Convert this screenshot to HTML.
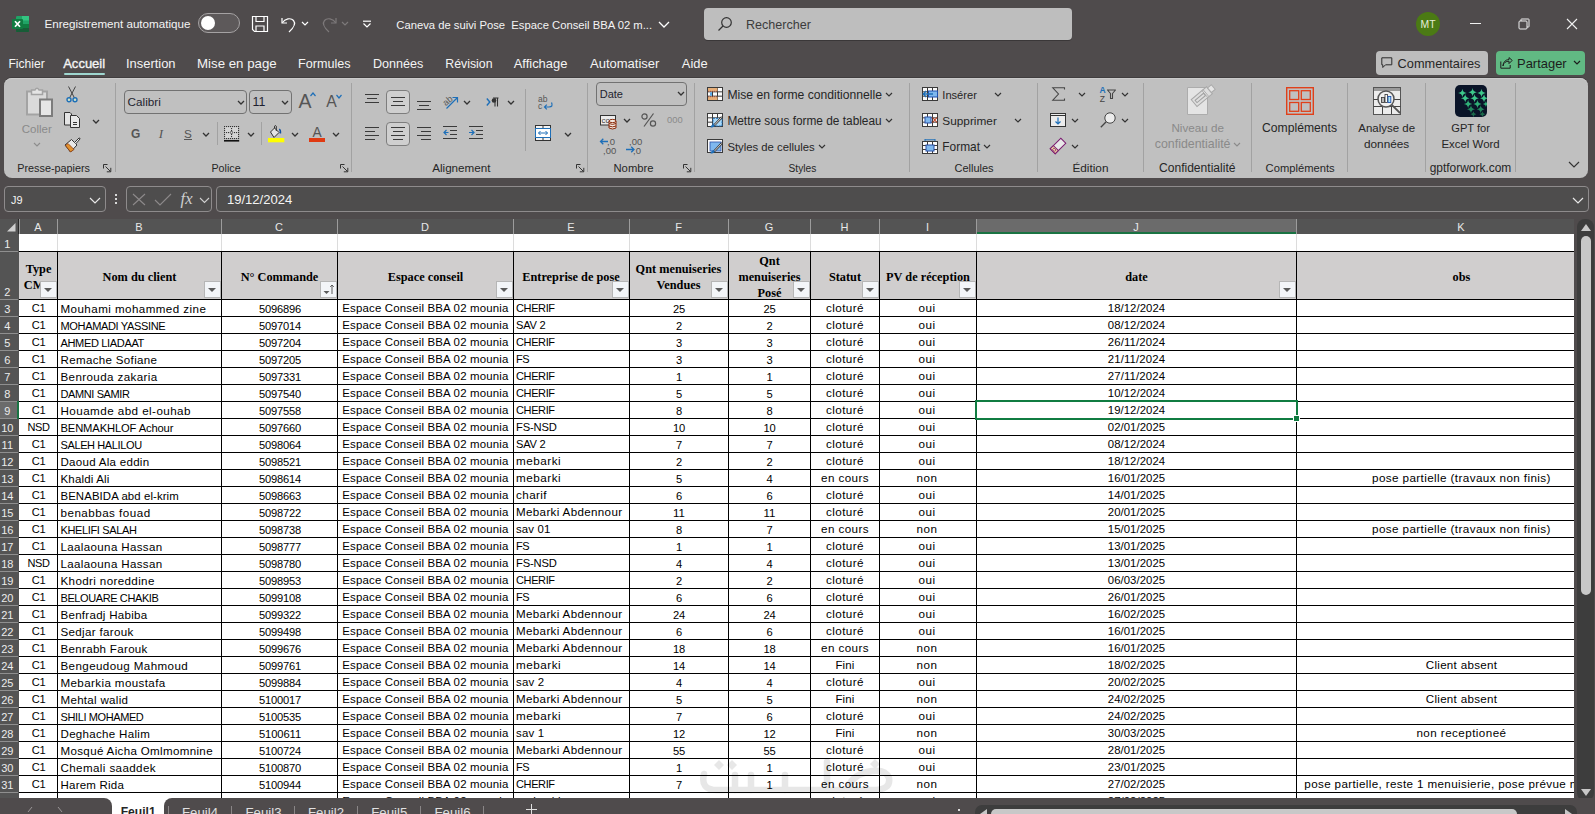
<!DOCTYPE html><html><head><meta charset="utf-8"><style>
*{margin:0;padding:0;box-sizing:border-box}
html,body{width:1595px;height:814px;overflow:hidden;background:#4f4b4c;font-family:"Liberation Sans",sans-serif}
.a{position:absolute}
svg.a{overflow:visible}
.t{position:absolute;white-space:nowrap}
.cell{position:absolute;white-space:nowrap;overflow:hidden;color:#000;line-height:17px;height:17px}
</style></head><body>

<svg class="a" style="left:12px;top:16px" width="17" height="16" viewBox="0 0 17 16"><rect x="4" y="0" width="13" height="16" rx="1.2" fill="#21a366"/>
<rect x="4" y="8" width="13" height="8" fill="#107c41"/><rect x="10" y="0" width="7" height="4.5" fill="#33c481"/>
<path d="M4 12 H17 V14.8 Q17 16 15.8 16 H5.2 Q4 16 4 14.8 Z" fill="#185c37"/>
<rect x="0" y="3" width="11" height="10" rx="1" fill="#107c41"/>
<path d="M3 5.2 L8 10.8 M8 5.2 L3 10.8" stroke="#fff" stroke-width="1.7"/></svg>
<div class="t" style="left:44.50px;top:14.00px;font-size:11.62px;line-height:20px;color:#f4f4f4;font-family:'Liberation Sans',sans-serif">Enregistrement automatique</div>
<div class="a" style="left:198px;top:13px;width:42px;height:20px;border-radius:10px;border:1px solid #a5a2a3;background:#5d595a"></div>
<div class="a" style="left:201px;top:16px;width:14px;height:14px;border-radius:7px;background:#fff"></div>
<svg class="a" style="left:251px;top:15px" width="18" height="18" viewBox="0 0 18 18"><path d="M1.5 1.5 H16.5 V16.5 H3.5 L1.5 14.5 Z" fill="none" stroke="#fff" stroke-width="1.2"/><path d="M5 1.5 V6.5 H13 V1.5 M5 16.5 V11 H13 V16.5" fill="none" stroke="#fff" stroke-width="1.2"/></svg>
<svg class="a" style="left:280px;top:15px" width="18" height="18" viewBox="0 0 18 18"><path d="M2 3 V8 H7" fill="none" stroke="#fff" stroke-width="1.2"/><path d="M2.3 7.8 C5 3.5 11 2.5 13.5 5.5 C16 8.5 14.5 12 9 17" fill="none" stroke="#fff" stroke-width="1.2"/></svg>
<svg class="a" style="left:301px;top:21px" width="8" height="5.0" viewBox="0 0 8 5.0"><path d="M1 1 L4.0 4.0 L7 1" fill="none" stroke="#fff" stroke-width="1.2"/></svg>
<svg class="a" style="left:320px;top:15px" width="18" height="18" viewBox="0 0 18 18"><path d="M16 3 V8 H11" fill="none" stroke="#7d797a" stroke-width="1.2"/><path d="M15.7 7.8 C13 3.5 7 2.5 4.5 5.5 C2 8.5 3.5 12 9 17" fill="none" stroke="#7d797a" stroke-width="1.2"/></svg>
<svg class="a" style="left:341px;top:21px" width="8" height="5.0" viewBox="0 0 8 5.0"><path d="M1 1 L4.0 4.0 L7 1" fill="none" stroke="#7d797a" stroke-width="1.2"/></svg>
<svg class="a" style="left:362px;top:20px" width="10" height="9" viewBox="0 0 10 9"><path d="M1 1.2 H9" stroke="#fff" stroke-width="1.2"/><path d="M1.5 3.5 L5 7 L8.5 3.5" fill="none" stroke="#fff" stroke-width="1.2"/></svg>
<div class="t" style="left:396.30px;top:15.00px;font-size:11.26px;line-height:20px;color:#f4f4f4;font-family:'Liberation Sans',sans-serif;white-space:pre">Caneva de suivi Pose  Espace Conseil BBA 02 m...</div>
<svg class="a" style="left:658px;top:21px" width="12" height="7.0" viewBox="0 0 12 7.0"><path d="M1 1 L6.0 6.0 L11 1" fill="none" stroke="#fff" stroke-width="1.3"/></svg>
<div class="a" style="left:704px;top:8px;width:368px;height:32px;border-radius:4px;background:#bebebe;box-shadow:0 1px 0 #3a3738"></div>
<svg class="a" style="left:717px;top:16px" width="16" height="16" viewBox="0 0 16 16"><circle cx="9.5" cy="6.5" r="4.8" fill="none" stroke="#333" stroke-width="1.2"/><path d="M6 10 L1.5 14.5" stroke="#333" stroke-width="1.3"/></svg>
<div class="t" style="left:746.00px;top:15.00px;font-size:12.57px;line-height:20px;color:#3c3c3c;font-family:'Liberation Sans',sans-serif">Rechercher</div>
<div class="a" style="left:1416px;top:12px;width:24px;height:24px;border-radius:12px;background:#4b7a14"></div>
<div class="t" style="left:1420.50px;top:15.00px;font-size:10.39px;line-height:20px;color:#e6ecd8;font-family:'Liberation Sans',sans-serif">MT</div>
<div class="a" style="left:1470px;top:23px;width:11px;height:1px;background:#f0f0f0"></div>
<svg class="a" style="left:1518px;top:18px" width="12" height="12" viewBox="0 0 12 12"><rect x="1" y="3" width="8" height="8" rx="1" fill="none" stroke="#f0f0f0" stroke-width="1"/><path d="M3 3 V1.5 Q3 1 3.5 1 H10.5 Q11 1 11 1.5 V8.5 Q11 9 10.5 9 H9" fill="none" stroke="#f0f0f0" stroke-width="1"/></svg>
<svg class="a" style="left:1566px;top:18px" width="12" height="12" viewBox="0 0 12 12"><path d="M1 1 L11 11 M11 1 L1 11" stroke="#f0f0f0" stroke-width="1.1"/></svg>
<div class="t" style="left:8.40px;top:54.00px;font-size:12.1px;line-height:20px;color:#f4f4f4;font-family:'Liberation Sans',sans-serif">Fichier</div>
<div class="t" style="left:63.20px;top:54.00px;font-size:13.03px;line-height:20px;color:#f4f4f4;font-family:'Liberation Sans',sans-serif;-webkit-text-stroke:0.35px #f4f4f4">Accueil</div>
<div class="t" style="left:126.00px;top:54.00px;font-size:12.93px;line-height:20px;color:#f4f4f4;font-family:'Liberation Sans',sans-serif">Insertion</div>
<div class="t" style="left:197.00px;top:54.00px;font-size:13.27px;line-height:20px;color:#f4f4f4;font-family:'Liberation Sans',sans-serif">Mise en page</div>
<div class="t" style="left:298.00px;top:54.00px;font-size:12.62px;line-height:20px;color:#f4f4f4;font-family:'Liberation Sans',sans-serif">Formules</div>
<div class="t" style="left:373.00px;top:54.00px;font-size:12.59px;line-height:20px;color:#f4f4f4;font-family:'Liberation Sans',sans-serif">Données</div>
<div class="t" style="left:445.30px;top:54.00px;font-size:12.33px;line-height:20px;color:#f4f4f4;font-family:'Liberation Sans',sans-serif">Révision</div>
<div class="t" style="left:513.70px;top:54.00px;font-size:12.94px;line-height:20px;color:#f4f4f4;font-family:'Liberation Sans',sans-serif">Affichage</div>
<div class="t" style="left:590.00px;top:54.00px;font-size:13.03px;line-height:20px;color:#f4f4f4;font-family:'Liberation Sans',sans-serif">Automatiser</div>
<div class="t" style="left:681.80px;top:54.00px;font-size:12.89px;line-height:20px;color:#f4f4f4;font-family:'Liberation Sans',sans-serif">Aide</div>
<div class="a" style="left:64px;top:73px;width:41px;height:2px;background:#9ed6cf;border-radius:1px"></div>
<div class="a" style="left:1376px;top:51px;width:112px;height:24px;border-radius:4px;background:#bdbdbd"></div>
<svg class="a" style="left:1381px;top:57px" width="12" height="12" viewBox="0 0 12 12"><path d="M0.8 0.8 H10.8 V7.8 H4.5 L1.8 10.5 V7.8 H0.8 Z" fill="none" stroke="#2b2b2b" stroke-width="1"/></svg>
<div class="t" style="left:1397.60px;top:54.00px;font-size:12.76px;line-height:20px;color:#262626;font-family:'Liberation Sans',sans-serif">Commentaires</div>
<div class="a" style="left:1496px;top:51px;width:89px;height:24px;border-radius:4px;background:#61b983"></div>
<svg class="a" style="left:1500px;top:57px" width="13" height="12" viewBox="0 0 13 12"><path d="M0.8 4.5 V11.2 H10.2 V8" fill="none" stroke="#1f1f1f" stroke-width="1"/><path d="M3 9 C3.5 5.5 6 4.2 9 4.2 V6.6 L12.2 3.4 L9 0.6 V2.6 C5.5 2.6 3.2 5 3 9 Z" fill="none" stroke="#1f1f1f" stroke-width="1"/></svg>
<div class="t" style="left:1517.00px;top:54.00px;font-size:12.96px;line-height:20px;color:#1c1c1c;font-family:'Liberation Sans',sans-serif">Partager</div>
<svg class="a" style="left:1573px;top:60px" width="8" height="5.0" viewBox="0 0 8 5.0"><path d="M1 1 L4.0 4.0 L7 1" fill="none" stroke="#1c1c1c" stroke-width="1.2"/></svg>
<div class="a" style="left:4px;top:78px;width:1584px;height:100px;background:#c0c0c0;border-radius:8px;box-shadow:inset 0 1px 0 #cbcbcb, 0 -1px 0 #403d3e"></div>
<div class="a" style="left:115px;top:83px;width:1px;height:89px;background:#a2a2a2"></div>
<div class="a" style="left:351px;top:83px;width:1px;height:89px;background:#a2a2a2"></div>
<div class="a" style="left:587px;top:83px;width:1px;height:89px;background:#a2a2a2"></div>
<div class="a" style="left:694px;top:83px;width:1px;height:89px;background:#a2a2a2"></div>
<div class="a" style="left:909px;top:83px;width:1px;height:89px;background:#a2a2a2"></div>
<div class="a" style="left:1037px;top:83px;width:1px;height:89px;background:#a2a2a2"></div>
<div class="a" style="left:1143px;top:83px;width:1px;height:89px;background:#a2a2a2"></div>
<div class="a" style="left:1251px;top:83px;width:1px;height:89px;background:#a2a2a2"></div>
<div class="a" style="left:1347px;top:83px;width:1px;height:89px;background:#a2a2a2"></div>
<div class="a" style="left:1425px;top:83px;width:1px;height:89px;background:#a2a2a2"></div>
<div class="a" style="left:1515px;top:83px;width:1px;height:89px;background:#a2a2a2"></div>
<div class="t" style="left:17.30px;top:158.00px;font-size:10.82px;line-height:20px;color:#262626;font-family:'Liberation Sans',sans-serif">Presse-papiers</div>
<div class="t" style="left:211.50px;top:158.00px;font-size:10.68px;line-height:20px;color:#262626;font-family:'Liberation Sans',sans-serif">Police</div>
<div class="t" style="left:432.20px;top:158.00px;font-size:11.67px;line-height:20px;color:#262626;font-family:'Liberation Sans',sans-serif">Alignement</div>
<div class="t" style="left:613.50px;top:158.00px;font-size:11.25px;line-height:20px;color:#262626;font-family:'Liberation Sans',sans-serif">Nombre</div>
<div class="t" style="left:788.50px;top:159.00px;font-size:10.21px;line-height:20px;color:#262626;font-family:'Liberation Sans',sans-serif">Styles</div>
<div class="t" style="left:954.50px;top:158.00px;font-size:10.99px;line-height:20px;color:#262626;font-family:'Liberation Sans',sans-serif">Cellules</div>
<div class="t" style="left:1072.40px;top:158.00px;font-size:11.81px;line-height:20px;color:#262626;font-family:'Liberation Sans',sans-serif">Édition</div>
<div class="t" style="left:1159.00px;top:158.00px;font-size:12.07px;line-height:20px;color:#262626;font-family:'Liberation Sans',sans-serif">Confidentialité</div>
<div class="t" style="left:1265.60px;top:158.00px;font-size:11.2px;line-height:20px;color:#262626;font-family:'Liberation Sans',sans-serif">Compléments</div>
<div class="t" style="left:1429.70px;top:158.00px;font-size:11.94px;line-height:20px;color:#262626;font-family:'Liberation Sans',sans-serif">gptforwork.com</div>
<svg class="a" style="left:103px;top:164px" width="9" height="9" viewBox="0 0 9 9"><path d="M0.5 4.5 V0.5 H4.5" fill="none" stroke="#333" stroke-width="1"/><path d="M2.5 2.5 L7.5 7.5 M7.8 3.8 V7.8 H3.8" fill="none" stroke="#333" stroke-width="1"/></svg>
<svg class="a" style="left:340px;top:164px" width="9" height="9" viewBox="0 0 9 9"><path d="M0.5 4.5 V0.5 H4.5" fill="none" stroke="#333" stroke-width="1"/><path d="M2.5 2.5 L7.5 7.5 M7.8 3.8 V7.8 H3.8" fill="none" stroke="#333" stroke-width="1"/></svg>
<svg class="a" style="left:576px;top:164px" width="9" height="9" viewBox="0 0 9 9"><path d="M0.5 4.5 V0.5 H4.5" fill="none" stroke="#333" stroke-width="1"/><path d="M2.5 2.5 L7.5 7.5 M7.8 3.8 V7.8 H3.8" fill="none" stroke="#333" stroke-width="1"/></svg>
<svg class="a" style="left:683px;top:164px" width="9" height="9" viewBox="0 0 9 9"><path d="M0.5 4.5 V0.5 H4.5" fill="none" stroke="#333" stroke-width="1"/><path d="M2.5 2.5 L7.5 7.5 M7.8 3.8 V7.8 H3.8" fill="none" stroke="#333" stroke-width="1"/></svg>
<svg class="a" style="left:26px;top:87px" width="28" height="31" viewBox="0 0 28 31"><path d="M1 4.5 H21 V27.5 H1 Z" fill="#dadada" stroke="#a3a3a3" stroke-width="2"/>
<path d="M5.5 3 H9 Q11 -0.5 13 3 H16.5 V7.5 H5.5 Z" fill="#e4e4e4" stroke="#a3a3a3" stroke-width="1.5"/>
<path d="M14 12.5 H26 V29 H14 Z" fill="#e6e6e6" stroke="#7c7c7c" stroke-width="2"/></svg>
<div class="t" style="left:21.70px;top:119.00px;font-size:11.52px;line-height:20px;color:#8a8a8a;font-family:'Liberation Sans',sans-serif">Coller</div>
<svg class="a" style="left:33px;top:142px" width="8" height="5.0" viewBox="0 0 8 5.0"><path d="M1 1 L4.0 4.0 L7 1" fill="none" stroke="#8c8c8c" stroke-width="1.1"/></svg>
<svg class="a" style="left:66px;top:86px" width="12" height="17" viewBox="0 0 12 17"><path d="M2.5 0.5 L8.5 12 M9.5 0.5 L3.5 12" stroke="#444" stroke-width="1"/><circle cx="3" cy="13.8" r="2" fill="#cfe0c8" stroke="#1e6fb8" stroke-width="1.4"/><circle cx="9" cy="13.8" r="2" fill="#cfe0c8" stroke="#1e6fb8" stroke-width="1.4"/></svg>
<svg class="a" style="left:64px;top:112px" width="17" height="17" viewBox="0 0 17 17"><path d="M0.5 0.5 H6 L7.5 2 V13 H0.5 Z" fill="#e4e4e4" stroke="#333" stroke-width="1"/><path d="M6.5 3.5 H12.5 L15.5 6.5 V15.5 H6.5 Z" fill="#e8e8e8" stroke="#333" stroke-width="1"/><path d="M9 10.5 H13 M9 12.5 H13" stroke="#333" stroke-width="1"/></svg>
<svg class="a" style="left:92px;top:119px" width="8" height="5.0" viewBox="0 0 8 5.0"><path d="M1 1 L4.0 4.0 L7 1" fill="none" stroke="#333" stroke-width="1.3"/></svg>
<svg class="a" style="left:64px;top:137px" width="17" height="17" viewBox="0 0 17 17"><path d="M1 8 L7.5 2.5 L13 8 L6.5 15 Z" fill="#e8e8e8" stroke="#333" stroke-width="1"/><path d="M1.5 8.5 L4 6.5 L10 12.5 L6.5 15 Z" fill="#e2922e" stroke="#8a3a10" stroke-width="0.8"/><path d="M10.5 5.5 L15 1 Q16.2 0.8 16 2 L11.8 6.8" fill="#eee" stroke="#333" stroke-width="1"/></svg>
<div class="a" style="left:124px;top:90px;width:123px;height:24px;border:1px solid #727272;border-radius:4px"></div>
<div class="t" style="left:127.60px;top:92.00px;font-size:11.71px;line-height:20px;color:#1f1f2f;font-family:'Liberation Sans',sans-serif">Calibri</div>
<svg class="a" style="left:237px;top:100px" width="8" height="5.0" viewBox="0 0 8 5.0"><path d="M1 1 L4.0 4.0 L7 1" fill="none" stroke="#333" stroke-width="1.3"/></svg>
<div class="a" style="left:249px;top:90px;width:43px;height:24px;border:1px solid #727272;border-radius:4px"></div>
<div class="t" style="left:252.50px;top:92.00px;font-size:12.4px;line-height:20px;color:#1f1f2f;font-family:'Liberation Sans',sans-serif">11</div>
<svg class="a" style="left:281px;top:100px" width="8" height="5.0" viewBox="0 0 8 5.0"><path d="M1 1 L4.0 4.0 L7 1" fill="none" stroke="#333" stroke-width="1.3"/></svg>
<div class="t" style="left:298.60px;top:91.00px;font-size:19.49px;line-height:20px;color:#555;font-family:'Liberation Sans',sans-serif">A</div>
<svg class="a" style="left:310px;top:92px" width="6" height="5" viewBox="0 0 6 5"><path d="M0.5 4 L3 1 L5.5 4" fill="none" stroke="#1e6fb8" stroke-width="1.2"/></svg>
<div class="t" style="left:326.20px;top:92.00px;font-size:15.74px;line-height:20px;color:#555;font-family:'Liberation Sans',sans-serif">A</div>
<svg class="a" style="left:336px;top:94px" width="6" height="5" viewBox="0 0 6 5"><path d="M0.5 1 L3 4 L5.5 1" fill="none" stroke="#1e6fb8" stroke-width="1.2"/></svg>
<div class="t" style="left:131.00px;top:124.00px;font-size:11.96px;line-height:20px;color:#555;font-family:'Liberation Sans',sans-serif;font-weight:bold">G</div>
<div class="t" style="left:158.80px;top:124.00px;font-size:13px;line-height:20px;color:#555;font-family:'Liberation Serif',serif;font-style:italic">I</div>
<div class="t" style="left:184.00px;top:124.00px;font-size:11.69px;line-height:20px;color:#555;font-family:'Liberation Sans',sans-serif">S</div>
<div class="a" style="left:184px;top:139px;width:8px;height:1px;background:#555"></div>
<svg class="a" style="left:202px;top:132px" width="8" height="5.0" viewBox="0 0 8 5.0"><path d="M1 1 L4.0 4.0 L7 1" fill="none" stroke="#333" stroke-width="1.3"/></svg>
<div class="a" style="left:217px;top:122px;width:1px;height:23px;background:#a2a2a2"></div>
<svg class="a" style="left:224px;top:126px" width="16" height="17" viewBox="0 0 16 17"><rect x="1" y="1" width="13" height="11" fill="#d4d4d4"/><g fill="#333"><rect x="0" y="0" width="1.1" height="1.1"/><rect x="0" y="12" width="1.1" height="1.1"/><rect x="2" y="0" width="1.1" height="1.1"/><rect x="2" y="12" width="1.1" height="1.1"/><rect x="4" y="0" width="1.1" height="1.1"/><rect x="4" y="12" width="1.1" height="1.1"/><rect x="6" y="0" width="1.1" height="1.1"/><rect x="6" y="12" width="1.1" height="1.1"/><rect x="8" y="0" width="1.1" height="1.1"/><rect x="8" y="12" width="1.1" height="1.1"/><rect x="10" y="0" width="1.1" height="1.1"/><rect x="10" y="12" width="1.1" height="1.1"/><rect x="12" y="0" width="1.1" height="1.1"/><rect x="12" y="12" width="1.1" height="1.1"/><rect x="14" y="0" width="1.1" height="1.1"/><rect x="14" y="12" width="1.1" height="1.1"/><rect x="0" y="2" width="1.1" height="1.1"/><rect x="14" y="2" width="1.1" height="1.1"/><rect x="0" y="4" width="1.1" height="1.1"/><rect x="14" y="4" width="1.1" height="1.1"/><rect x="0" y="6" width="1.1" height="1.1"/><rect x="14" y="6" width="1.1" height="1.1"/><rect x="0" y="8" width="1.1" height="1.1"/><rect x="14" y="8" width="1.1" height="1.1"/><rect x="0" y="10" width="1.1" height="1.1"/><rect x="14" y="10" width="1.1" height="1.1"/><rect x="2" y="6" width="1.1" height="1.1"/><rect x="4" y="6" width="1.1" height="1.1"/><rect x="10" y="6" width="1.1" height="1.1"/><rect x="12" y="6" width="1.1" height="1.1"/><rect x="7" y="2" width="1.1" height="1.1"/><rect x="7" y="4" width="1.1" height="1.1"/><rect x="7" y="8" width="1.1" height="1.1"/><rect x="7" y="10" width="1.1" height="1.1"/></g><circle cx="7.5" cy="6.5" r="1.2" fill="none" stroke="#333" stroke-width="0.7"/><rect x="0" y="14" width="15.2" height="1.6" fill="#111"/></svg>
<svg class="a" style="left:247px;top:132px" width="8" height="5.0" viewBox="0 0 8 5.0"><path d="M1 1 L4.0 4.0 L7 1" fill="none" stroke="#333" stroke-width="1.3"/></svg>
<div class="a" style="left:261px;top:122px;width:1px;height:23px;background:#a2a2a2"></div>
<svg class="a" style="left:268px;top:125px" width="17" height="18" viewBox="0 0 17 18"><path d="M2.5 7 L6.5 3 L11 7.5 L6 12.5 Z" fill="#e4e4e4" stroke="#333" stroke-width="1" stroke-linejoin="round"/><path d="M6.5 3 V1.2 Q7.6 -0.2 8.3 1.2 V6" fill="none" stroke="#333" stroke-width="1"/><path d="M11.2 4.2 Q12.8 5 12.4 8.5" fill="none" stroke="#1050a0" stroke-width="1.5"/><rect x="0" y="13" width="16.3" height="4.3" fill="#ffff00"/></svg>
<svg class="a" style="left:291px;top:132px" width="8" height="5.0" viewBox="0 0 8 5.0"><path d="M1 1 L4.0 4.0 L7 1" fill="none" stroke="#333" stroke-width="1.3"/></svg>
<div class="t" style="left:312.40px;top:123.00px;font-size:13.79px;line-height:20px;color:#555;font-family:'Liberation Sans',sans-serif">A</div>
<div class="a" style="left:309px;top:138px;width:16px;height:4px;background:#e03a12"></div>
<svg class="a" style="left:332px;top:132px" width="8" height="5.0" viewBox="0 0 8 5.0"><path d="M1 1 L4.0 4.0 L7 1" fill="none" stroke="#333" stroke-width="1.3"/></svg>
<div class="a" style="left:365px;top:94px;width:14px;height:1px;background:#3a3a3a"></div>
<div class="a" style="left:367px;top:98px;width:10px;height:1px;background:#3a3a3a"></div>
<div class="a" style="left:365px;top:102px;width:14px;height:1px;background:#3a3a3a"></div>
<div class="a" style="left:386px;top:90px;width:24px;height:24px;border:1px solid #7d7d7d;border-radius:4px;background:#cfcfcf"></div>
<div class="a" style="left:391px;top:97px;width:14px;height:1px;background:#3a3a3a"></div>
<div class="a" style="left:393px;top:101px;width:10px;height:1px;background:#3a3a3a"></div>
<div class="a" style="left:391px;top:105px;width:14px;height:1px;background:#3a3a3a"></div>
<div class="a" style="left:417px;top:101px;width:14px;height:1px;background:#3a3a3a"></div>
<div class="a" style="left:419px;top:105px;width:10px;height:1px;background:#3a3a3a"></div>
<div class="a" style="left:417px;top:109px;width:14px;height:1px;background:#3a3a3a"></div>
<svg class="a" style="left:441px;top:93px" width="18" height="17" viewBox="0 0 18 17"><text x="1" y="11" transform="rotate(-40 6 7)" font-family="Liberation Sans" font-size="9" fill="#555">ab</text><path d="M5.5 15.5 L16 5 M11.5 4.5 H16.5 V9.5" fill="none" stroke="#1e6fb8" stroke-width="1.2"/></svg>
<svg class="a" style="left:463px;top:100px" width="8" height="5.0" viewBox="0 0 8 5.0"><path d="M1 1 L4.0 4.0 L7 1" fill="none" stroke="#333" stroke-width="1.3"/></svg>
<svg class="a" style="left:486px;top:97px" width="13" height="10" viewBox="0 0 13 10"><path d="M0.8 1.5 L3.8 5 L0.8 8.5" fill="none" stroke="#1e6fb8" stroke-width="1.4"/><path d="M9 1 V9.5 M11.5 1 V9.5 M7 1 H12.5" stroke="#333" stroke-width="1.1"/><circle cx="8" cy="3.5" r="2.3" fill="#333"/></svg>
<svg class="a" style="left:507px;top:100px" width="8" height="5.0" viewBox="0 0 8 5.0"><path d="M1 1 L4.0 4.0 L7 1" fill="none" stroke="#333" stroke-width="1.3"/></svg>
<div class="a" style="left:365px;top:127px;width:14px;height:1px;background:#3a3a3a"></div>
<div class="a" style="left:365px;top:131px;width:10px;height:1px;background:#3a3a3a"></div>
<div class="a" style="left:365px;top:135px;width:14px;height:1px;background:#3a3a3a"></div>
<div class="a" style="left:365px;top:139px;width:10px;height:1px;background:#3a3a3a"></div>
<div class="a" style="left:386px;top:122px;width:24px;height:24px;border:1px solid #7d7d7d;border-radius:4px;background:#cfcfcf"></div>
<div class="a" style="left:391px;top:127px;width:14px;height:1px;background:#3a3a3a"></div>
<div class="a" style="left:393px;top:131px;width:10px;height:1px;background:#3a3a3a"></div>
<div class="a" style="left:391px;top:135px;width:14px;height:1px;background:#3a3a3a"></div>
<div class="a" style="left:393px;top:139px;width:10px;height:1px;background:#3a3a3a"></div>
<div class="a" style="left:417px;top:127px;width:14px;height:1px;background:#3a3a3a"></div>
<div class="a" style="left:421px;top:131px;width:10px;height:1px;background:#3a3a3a"></div>
<div class="a" style="left:417px;top:135px;width:14px;height:1px;background:#3a3a3a"></div>
<div class="a" style="left:421px;top:139px;width:10px;height:1px;background:#3a3a3a"></div>
<svg class="a" style="left:443px;top:126px" width="15" height="14" viewBox="0 0 15 14"><path d="M0 0.5 H14 M7 4.5 H14 M7 8.5 H14 M0 12.5 H14" stroke="#3a3a3a" stroke-width="1"/><path d="M5.5 6.5 H1 M3.5 4 L1 6.5 L3.5 9" fill="none" stroke="#1e6fb8" stroke-width="1.2"/></svg>
<svg class="a" style="left:469px;top:126px" width="15" height="14" viewBox="0 0 15 14"><path d="M0 0.5 H14 M7 4.5 H14 M7 8.5 H14 M0 12.5 H14" stroke="#3a3a3a" stroke-width="1"/><path d="M0 6.5 H5 M2.5 4 L5 6.5 L2.5 9" fill="none" stroke="#1e6fb8" stroke-width="1.2"/></svg>
<div class="a" style="left:525px;top:89px;width:1px;height:62px;background:#a2a2a2"></div>
<svg class="a" style="left:538px;top:94px" width="16" height="17" viewBox="0 0 16 17"><text x="0" y="7.5" font-family="Liberation Sans" font-size="8.5" fill="#555">ab</text><text x="0" y="15" font-family="Liberation Sans" font-size="8.5" fill="#555">c</text><path d="M13.5 8.5 Q15.5 13 11 13 H6.5 M8.8 10.7 L6.5 13 L8.8 15.3" fill="none" stroke="#1e6fb8" stroke-width="1.2"/></svg>
<svg class="a" style="left:535px;top:125px" width="16" height="16" viewBox="0 0 16 16"><rect x="0.5" y="0.5" width="15" height="15" fill="#f4f4f4" stroke="#333" stroke-width="1"/><path d="M8 0.5 V3 M8 13 V15.5" stroke="#333" stroke-width="1"/><rect x="0.5" y="3.5" width="15" height="9" fill="#fff" stroke="#1e6fb8" stroke-width="1"/><path d="M3.5 8 H12.5 M5.5 6 L3.5 8 L5.5 10 M10.5 6 L12.5 8 L10.5 10" fill="none" stroke="#1e6fb8" stroke-width="1"/></svg>
<svg class="a" style="left:564px;top:132px" width="8" height="5.0" viewBox="0 0 8 5.0"><path d="M1 1 L4.0 4.0 L7 1" fill="none" stroke="#333" stroke-width="1.3"/></svg>
<div class="a" style="left:596px;top:82px;width:91px;height:24px;border:1px solid #727272;border-radius:4px"></div>
<div class="t" style="left:599.70px;top:84.00px;font-size:11.03px;line-height:20px;color:#1f1f2f;font-family:'Liberation Sans',sans-serif">Date</div>
<svg class="a" style="left:677px;top:91px" width="8" height="5.0" viewBox="0 0 8 5.0"><path d="M1 1 L4.0 4.0 L7 1" fill="none" stroke="#333" stroke-width="1.3"/></svg>
<svg class="a" style="left:600px;top:115px" width="17" height="15" viewBox="0 0 17 15"><rect x="0.5" y="0.5" width="15" height="9.5" fill="#ececec" stroke="#333" stroke-width="1"/><text x="1.5" y="8.3" font-family="Liberation Sans" font-size="8" fill="#444">cc</text><g fill="#f6ece4" stroke="#8a2a0a" stroke-width="1"><path d="M9 6 V13 Q12.5 15 16 13 V6"/><ellipse cx="12.5" cy="6" rx="3.5" ry="1.6"/></g><path d="M9 8.5 Q12.5 10.3 16 8.5 M9 11 Q12.5 12.8 16 11" fill="none" stroke="#8a2a0a" stroke-width="1"/></svg>
<svg class="a" style="left:623px;top:118px" width="8" height="5.0" viewBox="0 0 8 5.0"><path d="M1 1 L4.0 4.0 L7 1" fill="none" stroke="#333" stroke-width="1.3"/></svg>
<svg class="a" style="left:641px;top:113px" width="16" height="14" viewBox="0 0 16 14"><circle cx="3.5" cy="3.5" r="2.6" fill="none" stroke="#555" stroke-width="1.2"/><circle cx="12" cy="10.5" r="2.6" fill="none" stroke="#555" stroke-width="1.2"/><path d="M12.5 0.5 L3 13.5" stroke="#555" stroke-width="1.2"/></svg>
<div class="t" style="left:667.00px;top:110.00px;font-size:9.35px;line-height:20px;color:#8a8a8a;font-family:'Liberation Sans',sans-serif">000</div>
<svg class="a" style="left:599px;top:137px" width="18" height="17" viewBox="0 0 18 17"><path d="M9 4.5 H1.5 M4.3 1.7 L1.5 4.5 L4.3 7.3" fill="none" stroke="#1e6fb8" stroke-width="1.3"/><text x="8" y="8" font-family="Liberation Sans" font-size="9.5" fill="#555">,0</text><text x="4" y="16.5" font-family="Liberation Sans" font-size="9.5" fill="#555">,00</text></svg>
<svg class="a" style="left:625px;top:137px" width="18" height="17" viewBox="0 0 18 17"><text x="4" y="8" font-family="Liberation Sans" font-size="9.5" fill="#555">,00</text><path d="M1 12.5 H9 M6.2 9.7 L9 12.5 L6.2 15.3" fill="none" stroke="#1e6fb8" stroke-width="1.3"/><text x="8" y="16.5" font-family="Liberation Sans" font-size="9.5" fill="#555">,0</text></svg>
<svg class="a" style="left:707px;top:87px" width="16" height="14" viewBox="0 0 16 14"><rect x="0" y="0" width="16" height="14" fill="#3a3a3a"/><rect x="1.00" y="1.00" width="4.00" height="3.33" fill="#fbfbfb"/><rect x="6.00" y="1.00" width="4.00" height="3.33" fill="#fbfbfb"/><rect x="11.00" y="1.00" width="4.00" height="3.33" fill="#fbfbfb"/><rect x="1.00" y="5.33" width="4.00" height="3.33" fill="#fbfbfb"/><rect x="6.00" y="5.33" width="4.00" height="3.33" fill="#fbfbfb"/><rect x="11.00" y="5.33" width="4.00" height="3.33" fill="#fbfbfb"/><rect x="1.00" y="9.67" width="4.00" height="3.33" fill="#fbfbfb"/><rect x="6.00" y="9.67" width="4.00" height="3.33" fill="#fbfbfb"/><rect x="11.00" y="9.67" width="4.00" height="3.33" fill="#fbfbfb"/><rect x="1" y="1" width="9.5" height="3.3" fill="#e6ae78"/><rect x="1" y="9.7" width="9.5" height="3.3" fill="#e6ae78"/><rect x="3" y="5.3" width="2" height="3.4" fill="#5aa8e8"/><path d="M1 4.3 H10.5 M1 9.7 H10.5" stroke="#a02010" stroke-width="0.6" stroke-dasharray="1 1"/></svg>
<div class="t" style="left:727.40px;top:85.00px;font-size:12.15px;line-height:20px;color:#262626;font-family:'Liberation Sans',sans-serif">Mise en forme conditionnelle</div>
<svg class="a" style="left:885px;top:92px" width="8" height="5.0" viewBox="0 0 8 5.0"><path d="M1 1 L4.0 4.0 L7 1" fill="none" stroke="#333" stroke-width="1.2"/></svg>
<svg class="a" style="left:707px;top:113px" width="16" height="14" viewBox="0 0 16 14"><rect x="0" y="0" width="16" height="14" fill="#3a3a3a"/><rect x="1.00" y="1.00" width="4.00" height="3.33" fill="#fbfbfb"/><rect x="6.00" y="1.00" width="4.00" height="3.33" fill="#fbfbfb"/><rect x="11.00" y="1.00" width="4.00" height="3.33" fill="#fbfbfb"/><rect x="1.00" y="5.33" width="4.00" height="3.33" fill="#fbfbfb"/><rect x="6.00" y="5.33" width="4.00" height="3.33" fill="#fbfbfb"/><rect x="11.00" y="5.33" width="4.00" height="3.33" fill="#fbfbfb"/><rect x="1.00" y="9.67" width="4.00" height="3.33" fill="#fbfbfb"/><rect x="6.00" y="9.67" width="4.00" height="3.33" fill="#fbfbfb"/><rect x="11.00" y="9.67" width="4.00" height="3.33" fill="#fbfbfb"/><rect x="6" y="5.3" width="9" height="7.7" fill="#a8d8f8" stroke="#1e6fb8" stroke-width="1" stroke-dasharray="2 1"/><path d="M7 12.5 L15 4" stroke="#3a3a3a" stroke-width="2.2"/><path d="M7.5 12 L14.5 4.5" stroke="#e8e8e8" stroke-width="0.9"/><path d="M3.5 14.5 Q4 11.5 6.8 11.2 L7.8 12.2 Q7 14.5 3.5 14.5 Z" fill="#1e6fb8"/></svg>
<div class="t" style="left:727.40px;top:111.00px;font-size:11.87px;line-height:20px;color:#262626;font-family:'Liberation Sans',sans-serif">Mettre sous forme de tableau</div>
<svg class="a" style="left:885px;top:118px" width="8" height="5.0" viewBox="0 0 8 5.0"><path d="M1 1 L4.0 4.0 L7 1" fill="none" stroke="#333" stroke-width="1.2"/></svg>
<svg class="a" style="left:707px;top:139px" width="16" height="14" viewBox="0 0 16 14"><rect x="0" y="0" width="16" height="14" fill="#3a3a3a"/><rect x="1" y="1" width="14" height="12" fill="#fbfbfb"/><rect x="3" y="3" width="11" height="9" fill="#7fb8ee" stroke="#2a50a8" stroke-width="0.8"/><path d="M7 12.5 L15 4" stroke="#3a3a3a" stroke-width="2.2"/><path d="M7.5 12 L14.5 4.5" stroke="#e8e8e8" stroke-width="0.9"/><path d="M3.5 14.5 Q4 11.5 6.8 11.2 L7.8 12.2 Q7 14.5 3.5 14.5 Z" fill="#1e6fb8"/></svg>
<div class="t" style="left:727.40px;top:137.00px;font-size:11.31px;line-height:20px;color:#262626;font-family:'Liberation Sans',sans-serif">Styles de cellules</div>
<svg class="a" style="left:818px;top:144px" width="8" height="5.0" viewBox="0 0 8 5.0"><path d="M1 1 L4.0 4.0 L7 1" fill="none" stroke="#333" stroke-width="1.2"/></svg>
<svg class="a" style="left:922px;top:87px" width="16" height="14" viewBox="0 0 16 14"><rect x="0" y="0" width="16" height="14" fill="#3a3a3a"/><rect x="1.00" y="1.00" width="4.00" height="3.33" fill="#fbfbfb"/><rect x="6.00" y="1.00" width="4.00" height="3.33" fill="#fbfbfb"/><rect x="11.00" y="1.00" width="4.00" height="3.33" fill="#fbfbfb"/><rect x="1.00" y="5.33" width="4.00" height="3.33" fill="#fbfbfb"/><rect x="6.00" y="5.33" width="4.00" height="3.33" fill="#fbfbfb"/><rect x="11.00" y="5.33" width="4.00" height="3.33" fill="#fbfbfb"/><rect x="1.00" y="9.67" width="4.00" height="3.33" fill="#fbfbfb"/><rect x="6.00" y="9.67" width="4.00" height="3.33" fill="#fbfbfb"/><rect x="11.00" y="9.67" width="4.00" height="3.33" fill="#fbfbfb"/><rect x="6.5" y="4" width="9" height="6" fill="#7fb8ee" stroke="#2050b0" stroke-width="1"/><path d="M11 7 H1.2 M4.2 4 L1.2 7 L4.2 10" fill="none" stroke="#1e6fb8" stroke-width="1.3"/></svg>
<div class="t" style="left:942.30px;top:85.00px;font-size:11.12px;line-height:20px;color:#262626;font-family:'Liberation Sans',sans-serif">Insérer</div>
<svg class="a" style="left:994px;top:92px" width="8" height="5.0" viewBox="0 0 8 5.0"><path d="M1 1 L4.0 4.0 L7 1" fill="none" stroke="#333" stroke-width="1.2"/></svg>
<svg class="a" style="left:922px;top:113px" width="16" height="14" viewBox="0 0 16 14"><rect x="0" y="0" width="16" height="14" fill="#3a3a3a"/><rect x="1.00" y="1.00" width="4.00" height="3.33" fill="#fbfbfb"/><rect x="6.00" y="1.00" width="4.00" height="3.33" fill="#fbfbfb"/><rect x="11.00" y="1.00" width="4.00" height="3.33" fill="#fbfbfb"/><rect x="1.00" y="5.33" width="4.00" height="3.33" fill="#fbfbfb"/><rect x="6.00" y="5.33" width="4.00" height="3.33" fill="#fbfbfb"/><rect x="11.00" y="5.33" width="4.00" height="3.33" fill="#fbfbfb"/><rect x="1.00" y="9.67" width="4.00" height="3.33" fill="#fbfbfb"/><rect x="6.00" y="9.67" width="4.00" height="3.33" fill="#fbfbfb"/><rect x="11.00" y="9.67" width="4.00" height="3.33" fill="#fbfbfb"/><rect x="3" y="4" width="6" height="6" fill="#7fb8ee" stroke="#2a50a8" stroke-width="1"/><path d="M10.5 4.5 L15 9.5 M15 4.5 L10.5 9.5" stroke="#c03a1a" stroke-width="1.1"/></svg>
<div class="t" style="left:942.30px;top:111.00px;font-size:11.84px;line-height:20px;color:#262626;font-family:'Liberation Sans',sans-serif">Supprimer</div>
<svg class="a" style="left:1014px;top:118px" width="8" height="5.0" viewBox="0 0 8 5.0"><path d="M1 1 L4.0 4.0 L7 1" fill="none" stroke="#333" stroke-width="1.2"/></svg>
<svg class="a" style="left:922px;top:139px" width="16" height="15" viewBox="0 0 16 15"><g transform="translate(0,2)"><rect x="0" y="0" width="16" height="13" fill="#3a3a3a"/><rect x="1.00" y="1.00" width="4.00" height="3.00" fill="#fbfbfb"/><rect x="6.00" y="1.00" width="4.00" height="3.00" fill="#fbfbfb"/><rect x="11.00" y="1.00" width="4.00" height="3.00" fill="#fbfbfb"/><rect x="1.00" y="5.00" width="4.00" height="3.00" fill="#fbfbfb"/><rect x="6.00" y="5.00" width="4.00" height="3.00" fill="#fbfbfb"/><rect x="11.00" y="5.00" width="4.00" height="3.00" fill="#fbfbfb"/><rect x="1.00" y="9.00" width="4.00" height="3.00" fill="#fbfbfb"/><rect x="6.00" y="9.00" width="4.00" height="3.00" fill="#fbfbfb"/><rect x="11.00" y="9.00" width="4.00" height="3.00" fill="#fbfbfb"/><rect x="4" y="4" width="8" height="6" fill="#7fb8ee" stroke="#2a50a8" stroke-width="1"/></g><path d="M3 0.8 H13 M3 0 V2 M13 0 V2" stroke="#1e6fb8" stroke-width="1"/></svg>
<div class="t" style="left:942.30px;top:137.00px;font-size:11.9px;line-height:20px;color:#262626;font-family:'Liberation Sans',sans-serif">Format</div>
<svg class="a" style="left:983px;top:144px" width="8" height="5.0" viewBox="0 0 8 5.0"><path d="M1 1 L4.0 4.0 L7 1" fill="none" stroke="#333" stroke-width="1.2"/></svg>
<svg class="a" style="left:1052px;top:87px" width="13" height="14" viewBox="0 0 13 14"><path d="M12.5 2.5 V0.8 H0.8 L6.5 7 L0.8 13.2 H12.5 V11.5" fill="none" stroke="#444" stroke-width="1.1"/></svg>
<svg class="a" style="left:1078px;top:92px" width="8" height="5.0" viewBox="0 0 8 5.0"><path d="M1 1 L4.0 4.0 L7 1" fill="none" stroke="#333" stroke-width="1.2"/></svg>
<svg class="a" style="left:1099px;top:86px" width="18" height="16" viewBox="0 0 18 16"><text x="0.5" y="7" font-family="Liberation Sans" font-size="8.5" font-weight="bold" fill="#1e6fb8">A</text><text x="0.8" y="15.6" font-family="Liberation Sans" font-size="8.5" fill="#444">Z</text><path d="M8.5 4 H16.5 L13.5 7.5 V12.5 H11.5 V7.5 Z" fill="none" stroke="#444" stroke-width="1.1" stroke-linejoin="round"/></svg>
<svg class="a" style="left:1121px;top:92px" width="8" height="5.0" viewBox="0 0 8 5.0"><path d="M1 1 L4.0 4.0 L7 1" fill="none" stroke="#333" stroke-width="1.2"/></svg>
<svg class="a" style="left:1050px;top:113px" width="16" height="14" viewBox="0 0 16 14"><rect x="0.5" y="0.5" width="15" height="13" fill="#ececec" stroke="#333" stroke-width="1"/><path d="M0.5 2.5 H15.5" stroke="#333" stroke-width="1"/><path d="M8 4.5 V11 M5.5 8.5 L8 11 L10.5 8.5" fill="none" stroke="#1e6fb8" stroke-width="1.2"/></svg>
<svg class="a" style="left:1071px;top:118px" width="8" height="5.0" viewBox="0 0 8 5.0"><path d="M1 1 L4.0 4.0 L7 1" fill="none" stroke="#333" stroke-width="1.2"/></svg>
<svg class="a" style="left:1100px;top:112px" width="16" height="16" viewBox="0 0 16 16"><circle cx="10" cy="6" r="5.2" fill="#ececec" stroke="#444" stroke-width="1"/><path d="M6.2 9.8 L0.8 15.2" stroke="#444" stroke-width="1.3"/></svg>
<svg class="a" style="left:1121px;top:118px" width="8" height="5.0" viewBox="0 0 8 5.0"><path d="M1 1 L4.0 4.0 L7 1" fill="none" stroke="#333" stroke-width="1.2"/></svg>
<svg class="a" style="left:1050px;top:138px" width="16" height="16" viewBox="0 0 16 16"><g transform="rotate(-45 8 8)"><rect x="0.5" y="4.5" width="15" height="7" fill="#e8e8e8" stroke="#7a1a70" stroke-width="1"/><rect x="0.5" y="4.5" width="4.5" height="7" fill="#f4d8a0" stroke="#7a1a70" stroke-width="1"/><rect x="1.8" y="6.5" width="2" height="3" fill="none" stroke="#7a1a70" stroke-width="0.7"/></g></svg>
<svg class="a" style="left:1071px;top:144px" width="8" height="5.0" viewBox="0 0 8 5.0"><path d="M1 1 L4.0 4.0 L7 1" fill="none" stroke="#333" stroke-width="1.2"/></svg>
<svg class="a" style="left:1186px;top:85px" width="30" height="31" viewBox="0 0 30 31"><path d="M1.5 2.5 H21.5 V29.5 H1.5 Z" fill="#e4e4e4" stroke="#acacac" stroke-width="1"/><g transform="rotate(-40 17 10)"><rect x="5" y="6" width="20" height="9" fill="#dedede" stroke="#a8a8a8" stroke-width="1"/><rect x="7.5" y="9" width="11" height="3" fill="none" stroke="#a0a0a0" stroke-width="1"/><path d="M19 6 V15 M20.5 6 V15" stroke="#a8a8a8" stroke-width="0.8"/><rect x="25" y="7.5" width="5" height="6" fill="#e6e6e6" stroke="#acacac" stroke-width="1"/></g></svg>
<div class="t" style="left:1171.40px;top:118.00px;font-size:11.66px;line-height:20px;color:#8a8a8a;font-family:'Liberation Sans',sans-serif">Niveau de</div>
<div class="t" style="left:1154.80px;top:134.00px;font-size:12.39px;line-height:20px;color:#8a8a8a;font-family:'Liberation Sans',sans-serif">confidentialité</div>
<svg class="a" style="left:1233px;top:142px" width="8" height="5.0" viewBox="0 0 8 5.0"><path d="M1 1 L4.0 4.0 L7 1" fill="none" stroke="#8a8a8a" stroke-width="1.1"/></svg>
<svg class="a" style="left:1286px;top:87px" width="28" height="28" viewBox="0 0 28 28"><rect x="0.7" y="0.7" width="26.6" height="26.6" fill="none" stroke="#e0401a" stroke-width="1.4"/><rect x="3.7" y="3.7" width="9" height="8.8" fill="none" stroke="#e0401a" stroke-width="1.3"/><rect x="15.3" y="3.7" width="9" height="8.8" fill="none" stroke="#e0401a" stroke-width="1.3"/><rect x="3.7" y="15.5" width="9" height="8.8" fill="none" stroke="#e0401a" stroke-width="1.3"/><rect x="15.3" y="15.5" width="9" height="8.8" fill="none" stroke="#e0401a" stroke-width="1.3"/></svg>
<div class="t" style="left:1262.00px;top:118.00px;font-size:12.16px;line-height:20px;color:#262626;font-family:'Liberation Sans',sans-serif">Compléments</div>
<svg class="a" style="left:1373px;top:87px" width="29" height="29" viewBox="0 0 29 29"><rect x="0.5" y="0.5" width="27" height="27" fill="#ececec" stroke="#555" stroke-width="1"/><rect x="1" y="1" width="26" height="3" fill="#9a9a9a"/><path d="M0.5 12.5 H27.5 M0.5 19.5 H27.5 M9.5 19.5 V27.5 M18.5 19.5 V27.5" stroke="#444" stroke-width="1"/><circle cx="13" cy="12" r="8" fill="#f0f0f0" stroke="#555" stroke-width="1.5"/><path d="M18.8 17.8 L27 26" stroke="#555" stroke-width="1.8"/><rect x="8.5" y="10.5" width="3" height="5" fill="#b8b8b8" stroke="#333" stroke-width="0.8"/><rect x="12" y="7.5" width="2.5" height="8" fill="#f8f8f8" stroke="#333" stroke-width="0.8"/><rect x="15" y="9.5" width="2.8" height="6" fill="#aee8f0" stroke="#1e50b0" stroke-width="0.9"/></svg>
<div class="t" style="left:1358.30px;top:118.00px;font-size:11.48px;line-height:20px;color:#262626;font-family:'Liberation Sans',sans-serif">Analyse de</div>
<div class="t" style="left:1364.00px;top:134.00px;font-size:11.81px;line-height:20px;color:#262626;font-family:'Liberation Sans',sans-serif">données</div>
<svg class="a" style="left:1455px;top:85px" width="32" height="32" viewBox="0 0 32 32"><defs><clipPath id="gc"><rect x="0" y="0" width="32" height="32" rx="5"/></clipPath></defs><g clip-path="url(#gc)"><rect x="0" y="0" width="32" height="32" fill="#0a1428"/><path d="M7.4 3.7 Q7.83 7.57 11.7 8 Q7.83 8.43 7.4 12.3 Q6.970000000000001 8.43 3.1000000000000005 8 Q6.970000000000001 7.57 7.4 3.7 Z" fill="#3cc88a"/><path d="M17.6 2.9000000000000004 Q18.03 6.7700000000000005 21.900000000000002 7.2 Q18.03 7.63 17.6 11.5 Q17.17 7.63 13.3 7.2 Q17.17 6.7700000000000005 17.6 2.9000000000000004 Z" fill="#3cc88a"/><path d="M26.5 3.7 Q26.93 7.57 30.8 8 Q26.93 8.43 26.5 12.3 Q26.07 8.43 22.2 8 Q26.07 7.57 26.5 3.7 Z" fill="#3cc88a"/><path d="M10.2 9.0 Q10.629999999999999 12.870000000000001 14.5 13.3 Q10.629999999999999 13.73 10.2 17.6 Q9.77 13.73 5.8999999999999995 13.3 Q9.77 12.870000000000001 10.2 9.0 Z" fill="#3cc88a"/><path d="M19.6 9.0 Q20.03 12.870000000000001 23.900000000000002 13.3 Q20.03 13.73 19.6 17.6 Q19.17 13.73 15.3 13.3 Q19.17 12.870000000000001 19.6 9.0 Z" fill="#3cc88a"/><path d="M29 9.3 Q29.4 12.9 33 13.3 Q29.4 13.700000000000001 29 17.3 Q28.6 13.700000000000001 25 13.3 Q28.6 12.9 29 9.3 Z" fill="#3cc88a"/><path d="M13.1 14.8 Q13.52 18.58 17.3 19 Q13.52 19.42 13.1 23.2 Q12.68 19.42 8.899999999999999 19 Q12.68 18.58 13.1 14.8 Z" fill="#2fae76"/><path d="M22.5 14.8 Q22.92 18.58 26.7 19 Q22.92 19.42 22.5 23.2 Q22.08 19.42 18.3 19 Q22.08 18.58 22.5 14.8 Z" fill="#2fae76"/><path d="M31 16 Q31.3 18.7 34 19 Q31.3 19.3 31 22 Q30.7 19.3 28 19 Q30.7 18.7 31 16 Z" fill="#2fae76"/><path d="M16 20.3 Q16.4 23.900000000000002 20 24.3 Q16.4 24.7 16 28.3 Q15.6 24.7 12 24.3 Q15.6 23.900000000000002 16 20.3 Z" fill="#22875c"/><path d="M25.7 20.3 Q26.099999999999998 23.900000000000002 29.7 24.3 Q26.099999999999998 24.7 25.7 28.3 Q25.3 24.7 21.7 24.3 Q25.3 23.900000000000002 25.7 20.3 Z" fill="#22875c"/><path d="M18.4 26.2 Q18.7 28.9 21.4 29.2 Q18.7 29.5 18.4 32.2 Q18.099999999999998 29.5 15.399999999999999 29.2 Q18.099999999999998 28.9 18.4 26.2 Z" fill="#1a6a4a"/><path d="M27.4 26.2 Q27.7 28.9 30.4 29.2 Q27.7 29.5 27.4 32.2 Q27.099999999999998 29.5 24.4 29.2 Q27.099999999999998 28.9 27.4 26.2 Z" fill="#1a6a4a"/></g></svg>
<div class="t" style="left:1451.30px;top:118.00px;font-size:11.11px;line-height:20px;color:#262626;font-family:'Liberation Sans',sans-serif">GPT for</div>
<div class="t" style="left:1441.40px;top:134.00px;font-size:11.44px;line-height:20px;color:#262626;font-family:'Liberation Sans',sans-serif">Excel Word</div>
<svg class="a" style="left:1568px;top:161px" width="12" height="7.0" viewBox="0 0 12 7.0"><path d="M1 1 L6.0 6.0 L11 1" fill="none" stroke="#333" stroke-width="1.2"/></svg>
<div class="a" style="left:4px;top:186px;width:102px;height:26px;border:1px solid #8e8b8c;border-radius:4px;background:#4e4d4d"></div>
<div class="t" style="left:11.10px;top:190.00px;font-size:10.89px;line-height:20px;color:#f4f4f4;font-family:'Liberation Sans',sans-serif">J9</div>
<svg class="a" style="left:89px;top:197px" width="12" height="7.0" viewBox="0 0 12 7.0"><path d="M1 1 L6.0 6.0 L11 1" fill="none" stroke="#e8e8e8" stroke-width="1.2"/></svg>
<div class="a" style="left:115px;top:194px;width:2px;height:2px;background:#d8d8d8"></div>
<div class="a" style="left:115px;top:198px;width:2px;height:2px;background:#d8d8d8"></div>
<div class="a" style="left:115px;top:202px;width:2px;height:2px;background:#d8d8d8"></div>
<div class="a" style="left:126px;top:186px;width:86px;height:26px;border:1px solid #8e8b8c;border-radius:4px;background:#4e4d4d"></div>
<svg class="a" style="left:132px;top:193px" width="14" height="13" viewBox="0 0 14 13"><path d="M1 1 L13 12 M13 1 L1 12" stroke="#8d8a8b" stroke-width="1.1"/></svg>
<svg class="a" style="left:154px;top:193px" width="18" height="13" viewBox="0 0 18 13"><path d="M1 7 L6 12 L17 1" fill="none" stroke="#8d8a8b" stroke-width="1.1"/></svg>
<div class="t" style="left:180.60px;top:189.00px;font-size:16.57px;line-height:20px;color:#cfcfcf;font-family:'Liberation Serif',serif;font-style:italic">fx</div>
<svg class="a" style="left:199px;top:197px" width="11" height="6.5" viewBox="0 0 11 6.5"><path d="M1 1 L5.5 5.5 L10 1" fill="none" stroke="#d0d0d0" stroke-width="1.1"/></svg>
<div class="a" style="left:216px;top:186px;width:1373px;height:26px;border:1px solid #8e8b8c;border-radius:4px;background:#4e4d4d"></div>
<div class="t" style="left:226.90px;top:190.00px;font-size:13.05px;line-height:20px;color:#f4f4f4;font-family:'Liberation Sans',sans-serif">19/12/2024</div>
<svg class="a" style="left:1572px;top:197px" width="12" height="7.0" viewBox="0 0 12 7.0"><path d="M1 1 L6.0 6.0 L11 1" fill="none" stroke="#e8e8e8" stroke-width="1.2"/></svg>
<div class="a" style="left:0px;top:219px;width:1574px;height:15px;background:#545454"></div>
<div class="a" style="left:977px;top:219px;width:319px;height:13px;background:#6b6b6b"></div>
<div class="a" style="left:976px;top:232px;width:321px;height:2px;background:#1a7343"></div>
<svg class="a" style="left:7px;top:223px" width="9" height="9" viewBox="0 0 9 9"><path d="M8.5 0 V8.5 H0 Z" fill="#d0d0d0"/></svg>
<div class="t" style="left:34.33px;top:217.00px;font-size:11px;line-height:20px;color:#e8e8e8;font-family:'Liberation Sans',sans-serif">A</div>
<div class="t" style="left:135.33px;top:217.00px;font-size:11px;line-height:20px;color:#e8e8e8;font-family:'Liberation Sans',sans-serif">B</div>
<div class="t" style="left:275.03px;top:217.00px;font-size:11px;line-height:20px;color:#e8e8e8;font-family:'Liberation Sans',sans-serif">C</div>
<div class="t" style="left:421.03px;top:217.00px;font-size:11px;line-height:20px;color:#e8e8e8;font-family:'Liberation Sans',sans-serif">D</div>
<div class="t" style="left:567.33px;top:217.00px;font-size:11px;line-height:20px;color:#e8e8e8;font-family:'Liberation Sans',sans-serif">E</div>
<div class="t" style="left:675.14px;top:217.00px;font-size:11px;line-height:20px;color:#e8e8e8;font-family:'Liberation Sans',sans-serif">F</div>
<div class="t" style="left:764.72px;top:217.00px;font-size:11px;line-height:20px;color:#e8e8e8;font-family:'Liberation Sans',sans-serif">G</div>
<div class="t" style="left:840.53px;top:217.00px;font-size:11px;line-height:20px;color:#e8e8e8;font-family:'Liberation Sans',sans-serif">H</div>
<div class="t" style="left:925.97px;top:217.00px;font-size:11px;line-height:20px;color:#e8e8e8;font-family:'Liberation Sans',sans-serif">I</div>
<div class="t" style="left:1133.25px;top:217.00px;font-size:11px;line-height:20px;color:#e8e8e8;font-family:'Liberation Sans',sans-serif">J</div>
<div class="t" style="left:1457.33px;top:217.00px;font-size:11px;line-height:20px;color:#e8e8e8;font-family:'Liberation Sans',sans-serif">K</div>
<div class="a" style="left:19px;top:219px;width:1px;height:15px;background:#9c9c9c"></div>
<div class="a" style="left:57px;top:219px;width:1px;height:15px;background:#9c9c9c"></div>
<div class="a" style="left:221px;top:219px;width:1px;height:15px;background:#9c9c9c"></div>
<div class="a" style="left:337px;top:219px;width:1px;height:15px;background:#9c9c9c"></div>
<div class="a" style="left:513px;top:219px;width:1px;height:15px;background:#9c9c9c"></div>
<div class="a" style="left:629px;top:219px;width:1px;height:15px;background:#9c9c9c"></div>
<div class="a" style="left:728px;top:219px;width:1px;height:15px;background:#9c9c9c"></div>
<div class="a" style="left:810px;top:219px;width:1px;height:15px;background:#9c9c9c"></div>
<div class="a" style="left:879px;top:219px;width:1px;height:15px;background:#9c9c9c"></div>
<div class="a" style="left:976px;top:219px;width:1px;height:15px;background:#9c9c9c"></div>
<div class="a" style="left:1296px;top:219px;width:1px;height:15px;background:#9c9c9c"></div>
<div class="a" style="left:18px;top:219px;width:1px;height:15px;background:#2a2a2a"></div>
<div class="a" style="left:0px;top:234px;width:19px;height:564px;background:#545454"></div>
<div class="a" style="left:19px;top:234px;width:1555px;height:564px;background:#fff"></div>
<div class="a" style="left:57px;top:234px;width:1px;height:17px;background:#dcdcdc"></div>
<div class="a" style="left:221px;top:234px;width:1px;height:17px;background:#dcdcdc"></div>
<div class="a" style="left:337px;top:234px;width:1px;height:17px;background:#dcdcdc"></div>
<div class="a" style="left:513px;top:234px;width:1px;height:17px;background:#dcdcdc"></div>
<div class="a" style="left:629px;top:234px;width:1px;height:17px;background:#dcdcdc"></div>
<div class="a" style="left:728px;top:234px;width:1px;height:17px;background:#dcdcdc"></div>
<div class="a" style="left:810px;top:234px;width:1px;height:17px;background:#dcdcdc"></div>
<div class="a" style="left:879px;top:234px;width:1px;height:17px;background:#dcdcdc"></div>
<div class="a" style="left:976px;top:234px;width:1px;height:17px;background:#dcdcdc"></div>
<div class="a" style="left:1296px;top:234px;width:1px;height:17px;background:#dcdcdc"></div>
<div class="a" style="left:19px;top:251px;width:1555px;height:48px;background:#d0cece"></div>
<div class="a" style="left:0px;top:401px;width:17px;height:17px;background:#6b6b6b"></div>
<div class="a" style="left:0px;top:251px;width:18px;height:1px;background:#8f8f8f"></div>
<div class="t" style="left:4.24px;top:234.00px;font-size:11px;line-height:20px;color:#ececec;font-family:'Liberation Sans',sans-serif">1</div>
<div class="a" style="left:0px;top:299px;width:18px;height:1px;background:#8f8f8f"></div>
<div class="t" style="left:4.24px;top:282.00px;font-size:11px;line-height:20px;color:#ececec;font-family:'Liberation Sans',sans-serif">2</div>
<div class="a" style="left:0px;top:316px;width:18px;height:1px;background:#8f8f8f"></div>
<div class="t" style="left:4.24px;top:299.00px;font-size:11px;line-height:20px;color:#ececec;font-family:'Liberation Sans',sans-serif">3</div>
<div class="a" style="left:0px;top:333px;width:18px;height:1px;background:#8f8f8f"></div>
<div class="t" style="left:4.24px;top:316.00px;font-size:11px;line-height:20px;color:#ececec;font-family:'Liberation Sans',sans-serif">4</div>
<div class="a" style="left:0px;top:350px;width:18px;height:1px;background:#8f8f8f"></div>
<div class="t" style="left:4.24px;top:333.00px;font-size:11px;line-height:20px;color:#ececec;font-family:'Liberation Sans',sans-serif">5</div>
<div class="a" style="left:0px;top:367px;width:18px;height:1px;background:#8f8f8f"></div>
<div class="t" style="left:4.24px;top:350.00px;font-size:11px;line-height:20px;color:#ececec;font-family:'Liberation Sans',sans-serif">6</div>
<div class="a" style="left:0px;top:384px;width:18px;height:1px;background:#8f8f8f"></div>
<div class="t" style="left:4.24px;top:367.00px;font-size:11px;line-height:20px;color:#ececec;font-family:'Liberation Sans',sans-serif">7</div>
<div class="a" style="left:0px;top:401px;width:18px;height:1px;background:#8f8f8f"></div>
<div class="t" style="left:4.24px;top:384.00px;font-size:11px;line-height:20px;color:#ececec;font-family:'Liberation Sans',sans-serif">8</div>
<div class="a" style="left:0px;top:418px;width:18px;height:1px;background:#8f8f8f"></div>
<div class="t" style="left:4.24px;top:401.00px;font-size:11px;line-height:20px;color:#ececec;font-family:'Liberation Sans',sans-serif">9</div>
<div class="a" style="left:0px;top:435px;width:18px;height:1px;background:#8f8f8f"></div>
<div class="t" style="left:1.18px;top:418.00px;font-size:11px;line-height:20px;color:#ececec;font-family:'Liberation Sans',sans-serif">10</div>
<div class="a" style="left:0px;top:452px;width:18px;height:1px;background:#8f8f8f"></div>
<div class="t" style="left:1.59px;top:435.00px;font-size:11px;line-height:20px;color:#ececec;font-family:'Liberation Sans',sans-serif">11</div>
<div class="a" style="left:0px;top:469px;width:18px;height:1px;background:#8f8f8f"></div>
<div class="t" style="left:1.18px;top:452.00px;font-size:11px;line-height:20px;color:#ececec;font-family:'Liberation Sans',sans-serif">12</div>
<div class="a" style="left:0px;top:486px;width:18px;height:1px;background:#8f8f8f"></div>
<div class="t" style="left:1.18px;top:469.00px;font-size:11px;line-height:20px;color:#ececec;font-family:'Liberation Sans',sans-serif">13</div>
<div class="a" style="left:0px;top:503px;width:18px;height:1px;background:#8f8f8f"></div>
<div class="t" style="left:1.18px;top:486.00px;font-size:11px;line-height:20px;color:#ececec;font-family:'Liberation Sans',sans-serif">14</div>
<div class="a" style="left:0px;top:520px;width:18px;height:1px;background:#8f8f8f"></div>
<div class="t" style="left:1.18px;top:503.00px;font-size:11px;line-height:20px;color:#ececec;font-family:'Liberation Sans',sans-serif">15</div>
<div class="a" style="left:0px;top:537px;width:18px;height:1px;background:#8f8f8f"></div>
<div class="t" style="left:1.18px;top:520.00px;font-size:11px;line-height:20px;color:#ececec;font-family:'Liberation Sans',sans-serif">16</div>
<div class="a" style="left:0px;top:554px;width:18px;height:1px;background:#8f8f8f"></div>
<div class="t" style="left:1.18px;top:537.00px;font-size:11px;line-height:20px;color:#ececec;font-family:'Liberation Sans',sans-serif">17</div>
<div class="a" style="left:0px;top:571px;width:18px;height:1px;background:#8f8f8f"></div>
<div class="t" style="left:1.18px;top:554.00px;font-size:11px;line-height:20px;color:#ececec;font-family:'Liberation Sans',sans-serif">18</div>
<div class="a" style="left:0px;top:588px;width:18px;height:1px;background:#8f8f8f"></div>
<div class="t" style="left:1.18px;top:571.00px;font-size:11px;line-height:20px;color:#ececec;font-family:'Liberation Sans',sans-serif">19</div>
<div class="a" style="left:0px;top:605px;width:18px;height:1px;background:#8f8f8f"></div>
<div class="t" style="left:1.18px;top:588.00px;font-size:11px;line-height:20px;color:#ececec;font-family:'Liberation Sans',sans-serif">20</div>
<div class="a" style="left:0px;top:622px;width:18px;height:1px;background:#8f8f8f"></div>
<div class="t" style="left:1.18px;top:605.00px;font-size:11px;line-height:20px;color:#ececec;font-family:'Liberation Sans',sans-serif">21</div>
<div class="a" style="left:0px;top:639px;width:18px;height:1px;background:#8f8f8f"></div>
<div class="t" style="left:1.18px;top:622.00px;font-size:11px;line-height:20px;color:#ececec;font-family:'Liberation Sans',sans-serif">22</div>
<div class="a" style="left:0px;top:656px;width:18px;height:1px;background:#8f8f8f"></div>
<div class="t" style="left:1.18px;top:639.00px;font-size:11px;line-height:20px;color:#ececec;font-family:'Liberation Sans',sans-serif">23</div>
<div class="a" style="left:0px;top:673px;width:18px;height:1px;background:#8f8f8f"></div>
<div class="t" style="left:1.18px;top:656.00px;font-size:11px;line-height:20px;color:#ececec;font-family:'Liberation Sans',sans-serif">24</div>
<div class="a" style="left:0px;top:690px;width:18px;height:1px;background:#8f8f8f"></div>
<div class="t" style="left:1.18px;top:673.00px;font-size:11px;line-height:20px;color:#ececec;font-family:'Liberation Sans',sans-serif">25</div>
<div class="a" style="left:0px;top:707px;width:18px;height:1px;background:#8f8f8f"></div>
<div class="t" style="left:1.18px;top:690.00px;font-size:11px;line-height:20px;color:#ececec;font-family:'Liberation Sans',sans-serif">26</div>
<div class="a" style="left:0px;top:724px;width:18px;height:1px;background:#8f8f8f"></div>
<div class="t" style="left:1.18px;top:707.00px;font-size:11px;line-height:20px;color:#ececec;font-family:'Liberation Sans',sans-serif">27</div>
<div class="a" style="left:0px;top:741px;width:18px;height:1px;background:#8f8f8f"></div>
<div class="t" style="left:1.18px;top:724.00px;font-size:11px;line-height:20px;color:#ececec;font-family:'Liberation Sans',sans-serif">28</div>
<div class="a" style="left:0px;top:758px;width:18px;height:1px;background:#8f8f8f"></div>
<div class="t" style="left:1.18px;top:741.00px;font-size:11px;line-height:20px;color:#ececec;font-family:'Liberation Sans',sans-serif">29</div>
<div class="a" style="left:0px;top:775px;width:18px;height:1px;background:#8f8f8f"></div>
<div class="t" style="left:1.18px;top:758.00px;font-size:11px;line-height:20px;color:#ececec;font-family:'Liberation Sans',sans-serif">30</div>
<div class="a" style="left:0px;top:792px;width:18px;height:1px;background:#8f8f8f"></div>
<div class="t" style="left:1.18px;top:775.00px;font-size:11px;line-height:20px;color:#ececec;font-family:'Liberation Sans',sans-serif">31</div>
<div class="a" style="left:0px;top:809px;width:18px;height:1px;background:#8f8f8f"></div>
<div class="t" style="left:1.18px;top:792.00px;font-size:11px;line-height:20px;color:#ececec;font-family:'Liberation Sans',sans-serif">32</div>
<div class="a" style="left:17px;top:401px;width:2px;height:18px;background:#1a7343"></div>
<div class="a" style="left:19px;top:234px;width:1555px;height:564px;overflow:hidden">
<div class="t" style="left:12.74px;top:64.00px;font-size:11.1px;line-height:20px;font-family:'Liberation Sans',sans-serif;color:#000;letter-spacing:-0.332px">C1</div>
<div class="a" style="left:39px;top:65.00px;width:163px;height:20px;overflow:hidden"><div class="t" style="left:2.50px;top:0;font-size:11.6px;line-height:20px;color:#000;letter-spacing:0.439px">Mouhami mohammed zine</div></div>
<div class="t" style="left:239.93px;top:65.00px;font-size:11.15px;line-height:20px;font-family:'Liberation Sans',sans-serif;color:#000;letter-spacing:-0.181px">5096896</div>
<div class="t" style="left:323.24px;top:64.00px;font-size:11.45px;line-height:20px;font-family:'Liberation Sans',sans-serif;color:#000;letter-spacing:0.173px">Espace Conseil BBA 02 mounia</div>
<div class="t" style="left:497.00px;top:64.00px;font-size:11.0px;line-height:20px;font-family:'Liberation Sans',sans-serif;color:#000;letter-spacing:-0.377px">CHERIF</div>
<div class="t" style="left:653.98px;top:65.00px;font-size:11.15px;line-height:20px;font-family:'Liberation Sans',sans-serif;color:#000;letter-spacing:-0.181px">25</div>
<div class="t" style="left:744.48px;top:65.00px;font-size:11.15px;line-height:20px;font-family:'Liberation Sans',sans-serif;color:#000;letter-spacing:-0.181px">25</div>
<div class="t" style="left:806.95px;top:64.00px;font-size:11.7px;line-height:20px;font-family:'Liberation Sans',sans-serif;color:#000;letter-spacing:0.427px">cloturé</div>
<div class="t" style="left:899.53px;top:64.00px;font-size:11.7px;line-height:20px;font-family:'Liberation Sans',sans-serif;color:#000;letter-spacing:0.443px">oui</div>
<div class="t" style="left:1088.82px;top:64.00px;font-size:11.35px;line-height:20px;font-family:'Liberation Sans',sans-serif;color:#000;letter-spacing:0.055px">18/12/2024</div>
<div class="t" style="left:12.74px;top:81.00px;font-size:11.1px;line-height:20px;font-family:'Liberation Sans',sans-serif;color:#000;letter-spacing:-0.332px">C1</div>
<div class="a" style="left:39px;top:82.00px;width:163px;height:20px;overflow:hidden"><div class="t" style="left:2.50px;top:0;font-size:11.05px;line-height:20px;color:#000;letter-spacing:-0.368px">MOHAMADI YASSINE</div></div>
<div class="t" style="left:239.93px;top:82.00px;font-size:11.15px;line-height:20px;font-family:'Liberation Sans',sans-serif;color:#000;letter-spacing:-0.181px">5097014</div>
<div class="t" style="left:323.24px;top:81.00px;font-size:11.45px;line-height:20px;font-family:'Liberation Sans',sans-serif;color:#000;letter-spacing:0.173px">Espace Conseil BBA 02 mounia</div>
<div class="t" style="left:497.00px;top:81.00px;font-size:11.1px;line-height:20px;font-family:'Liberation Sans',sans-serif;color:#000;letter-spacing:-0.239px">SAV 2</div>
<div class="t" style="left:656.99px;top:82.00px;font-size:11.15px;line-height:20px;font-family:'Liberation Sans',sans-serif;color:#000;letter-spacing:-0.181px">2</div>
<div class="t" style="left:747.49px;top:82.00px;font-size:11.15px;line-height:20px;font-family:'Liberation Sans',sans-serif;color:#000;letter-spacing:-0.181px">2</div>
<div class="t" style="left:806.95px;top:81.00px;font-size:11.7px;line-height:20px;font-family:'Liberation Sans',sans-serif;color:#000;letter-spacing:0.427px">cloturé</div>
<div class="t" style="left:899.53px;top:81.00px;font-size:11.7px;line-height:20px;font-family:'Liberation Sans',sans-serif;color:#000;letter-spacing:0.443px">oui</div>
<div class="t" style="left:1088.82px;top:81.00px;font-size:11.35px;line-height:20px;font-family:'Liberation Sans',sans-serif;color:#000;letter-spacing:0.055px">08/12/2024</div>
<div class="t" style="left:12.74px;top:98.00px;font-size:11.1px;line-height:20px;font-family:'Liberation Sans',sans-serif;color:#000;letter-spacing:-0.332px">C1</div>
<div class="a" style="left:39px;top:99.00px;width:163px;height:20px;overflow:hidden"><div class="t" style="left:2.50px;top:0;font-size:11.05px;line-height:20px;color:#000;letter-spacing:-0.364px">AHMED LIADAAT</div></div>
<div class="t" style="left:239.93px;top:99.00px;font-size:11.15px;line-height:20px;font-family:'Liberation Sans',sans-serif;color:#000;letter-spacing:-0.181px">5097204</div>
<div class="t" style="left:323.24px;top:98.00px;font-size:11.45px;line-height:20px;font-family:'Liberation Sans',sans-serif;color:#000;letter-spacing:0.173px">Espace Conseil BBA 02 mounia</div>
<div class="t" style="left:497.00px;top:98.00px;font-size:11.0px;line-height:20px;font-family:'Liberation Sans',sans-serif;color:#000;letter-spacing:-0.377px">CHERIF</div>
<div class="t" style="left:656.99px;top:99.00px;font-size:11.15px;line-height:20px;font-family:'Liberation Sans',sans-serif;color:#000;letter-spacing:-0.181px">3</div>
<div class="t" style="left:747.49px;top:99.00px;font-size:11.15px;line-height:20px;font-family:'Liberation Sans',sans-serif;color:#000;letter-spacing:-0.181px">3</div>
<div class="t" style="left:806.95px;top:98.00px;font-size:11.7px;line-height:20px;font-family:'Liberation Sans',sans-serif;color:#000;letter-spacing:0.427px">cloturé</div>
<div class="t" style="left:899.53px;top:98.00px;font-size:11.7px;line-height:20px;font-family:'Liberation Sans',sans-serif;color:#000;letter-spacing:0.443px">oui</div>
<div class="t" style="left:1088.82px;top:98.00px;font-size:11.4px;line-height:20px;font-family:'Liberation Sans',sans-serif;color:#000;letter-spacing:0.114px">26/11/2024</div>
<div class="t" style="left:12.74px;top:115.00px;font-size:11.1px;line-height:20px;font-family:'Liberation Sans',sans-serif;color:#000;letter-spacing:-0.332px">C1</div>
<div class="a" style="left:39px;top:116.00px;width:163px;height:20px;overflow:hidden"><div class="t" style="left:2.50px;top:0;font-size:11.55px;line-height:20px;color:#000;letter-spacing:0.335px">Remache Sofiane</div></div>
<div class="t" style="left:239.93px;top:116.00px;font-size:11.15px;line-height:20px;font-family:'Liberation Sans',sans-serif;color:#000;letter-spacing:-0.181px">5097205</div>
<div class="t" style="left:323.24px;top:115.00px;font-size:11.45px;line-height:20px;font-family:'Liberation Sans',sans-serif;color:#000;letter-spacing:0.173px">Espace Conseil BBA 02 mounia</div>
<div class="t" style="left:497.00px;top:115.00px;font-size:11.0px;line-height:20px;font-family:'Liberation Sans',sans-serif;color:#000;letter-spacing:-0.388px">FS</div>
<div class="t" style="left:656.99px;top:116.00px;font-size:11.15px;line-height:20px;font-family:'Liberation Sans',sans-serif;color:#000;letter-spacing:-0.181px">3</div>
<div class="t" style="left:747.49px;top:116.00px;font-size:11.15px;line-height:20px;font-family:'Liberation Sans',sans-serif;color:#000;letter-spacing:-0.181px">3</div>
<div class="t" style="left:806.95px;top:115.00px;font-size:11.7px;line-height:20px;font-family:'Liberation Sans',sans-serif;color:#000;letter-spacing:0.427px">cloturé</div>
<div class="t" style="left:899.53px;top:115.00px;font-size:11.7px;line-height:20px;font-family:'Liberation Sans',sans-serif;color:#000;letter-spacing:0.443px">oui</div>
<div class="t" style="left:1088.82px;top:115.00px;font-size:11.4px;line-height:20px;font-family:'Liberation Sans',sans-serif;color:#000;letter-spacing:0.114px">21/11/2024</div>
<div class="t" style="left:12.74px;top:132.00px;font-size:11.1px;line-height:20px;font-family:'Liberation Sans',sans-serif;color:#000;letter-spacing:-0.332px">C1</div>
<div class="a" style="left:39px;top:133.00px;width:163px;height:20px;overflow:hidden"><div class="t" style="left:2.50px;top:0;font-size:11.6px;line-height:20px;color:#000;letter-spacing:0.385px">Benrouda zakaria</div></div>
<div class="t" style="left:239.93px;top:133.00px;font-size:11.15px;line-height:20px;font-family:'Liberation Sans',sans-serif;color:#000;letter-spacing:-0.181px">5097331</div>
<div class="t" style="left:323.24px;top:132.00px;font-size:11.45px;line-height:20px;font-family:'Liberation Sans',sans-serif;color:#000;letter-spacing:0.173px">Espace Conseil BBA 02 mounia</div>
<div class="t" style="left:497.00px;top:132.00px;font-size:11.0px;line-height:20px;font-family:'Liberation Sans',sans-serif;color:#000;letter-spacing:-0.377px">CHERIF</div>
<div class="t" style="left:656.99px;top:133.00px;font-size:11.15px;line-height:20px;font-family:'Liberation Sans',sans-serif;color:#000;letter-spacing:-0.181px">1</div>
<div class="t" style="left:747.49px;top:133.00px;font-size:11.15px;line-height:20px;font-family:'Liberation Sans',sans-serif;color:#000;letter-spacing:-0.181px">1</div>
<div class="t" style="left:806.95px;top:132.00px;font-size:11.7px;line-height:20px;font-family:'Liberation Sans',sans-serif;color:#000;letter-spacing:0.427px">cloturé</div>
<div class="t" style="left:899.53px;top:132.00px;font-size:11.7px;line-height:20px;font-family:'Liberation Sans',sans-serif;color:#000;letter-spacing:0.443px">oui</div>
<div class="t" style="left:1088.82px;top:132.00px;font-size:11.4px;line-height:20px;font-family:'Liberation Sans',sans-serif;color:#000;letter-spacing:0.114px">27/11/2024</div>
<div class="t" style="left:12.74px;top:149.00px;font-size:11.1px;line-height:20px;font-family:'Liberation Sans',sans-serif;color:#000;letter-spacing:-0.332px">C1</div>
<div class="a" style="left:39px;top:150.00px;width:163px;height:20px;overflow:hidden"><div class="t" style="left:2.50px;top:0;font-size:11.0px;line-height:20px;color:#000;letter-spacing:-0.391px">DAMNI SAMIR</div></div>
<div class="t" style="left:239.93px;top:150.00px;font-size:11.15px;line-height:20px;font-family:'Liberation Sans',sans-serif;color:#000;letter-spacing:-0.181px">5097540</div>
<div class="t" style="left:323.24px;top:149.00px;font-size:11.45px;line-height:20px;font-family:'Liberation Sans',sans-serif;color:#000;letter-spacing:0.173px">Espace Conseil BBA 02 mounia</div>
<div class="t" style="left:497.00px;top:149.00px;font-size:11.0px;line-height:20px;font-family:'Liberation Sans',sans-serif;color:#000;letter-spacing:-0.377px">CHERIF</div>
<div class="t" style="left:656.99px;top:150.00px;font-size:11.15px;line-height:20px;font-family:'Liberation Sans',sans-serif;color:#000;letter-spacing:-0.181px">5</div>
<div class="t" style="left:747.49px;top:150.00px;font-size:11.15px;line-height:20px;font-family:'Liberation Sans',sans-serif;color:#000;letter-spacing:-0.181px">5</div>
<div class="t" style="left:806.95px;top:149.00px;font-size:11.7px;line-height:20px;font-family:'Liberation Sans',sans-serif;color:#000;letter-spacing:0.427px">cloturé</div>
<div class="t" style="left:899.53px;top:149.00px;font-size:11.7px;line-height:20px;font-family:'Liberation Sans',sans-serif;color:#000;letter-spacing:0.443px">oui</div>
<div class="t" style="left:1088.82px;top:149.00px;font-size:11.35px;line-height:20px;font-family:'Liberation Sans',sans-serif;color:#000;letter-spacing:0.055px">10/12/2024</div>
<div class="t" style="left:12.74px;top:166.00px;font-size:11.1px;line-height:20px;font-family:'Liberation Sans',sans-serif;color:#000;letter-spacing:-0.332px">C1</div>
<div class="a" style="left:39px;top:167.00px;width:163px;height:20px;overflow:hidden"><div class="t" style="left:2.50px;top:0;font-size:11.65px;line-height:20px;color:#000;letter-spacing:0.439px">Houamde abd el-ouhab</div></div>
<div class="t" style="left:239.93px;top:167.00px;font-size:11.15px;line-height:20px;font-family:'Liberation Sans',sans-serif;color:#000;letter-spacing:-0.181px">5097558</div>
<div class="t" style="left:323.24px;top:166.00px;font-size:11.45px;line-height:20px;font-family:'Liberation Sans',sans-serif;color:#000;letter-spacing:0.173px">Espace Conseil BBA 02 mounia</div>
<div class="t" style="left:497.00px;top:166.00px;font-size:11.0px;line-height:20px;font-family:'Liberation Sans',sans-serif;color:#000;letter-spacing:-0.377px">CHERIF</div>
<div class="t" style="left:656.99px;top:167.00px;font-size:11.15px;line-height:20px;font-family:'Liberation Sans',sans-serif;color:#000;letter-spacing:-0.181px">8</div>
<div class="t" style="left:747.49px;top:167.00px;font-size:11.15px;line-height:20px;font-family:'Liberation Sans',sans-serif;color:#000;letter-spacing:-0.181px">8</div>
<div class="t" style="left:806.95px;top:166.00px;font-size:11.7px;line-height:20px;font-family:'Liberation Sans',sans-serif;color:#000;letter-spacing:0.427px">cloturé</div>
<div class="t" style="left:899.53px;top:166.00px;font-size:11.7px;line-height:20px;font-family:'Liberation Sans',sans-serif;color:#000;letter-spacing:0.443px">oui</div>
<div class="t" style="left:1088.82px;top:166.00px;font-size:11.35px;line-height:20px;font-family:'Liberation Sans',sans-serif;color:#000;letter-spacing:0.055px">19/12/2024</div>
<div class="t" style="left:8.53px;top:183.00px;font-size:11.0px;line-height:20px;font-family:'Liberation Sans',sans-serif;color:#000;letter-spacing:-0.428px">NSD</div>
<div class="a" style="left:39px;top:184.00px;width:163px;height:20px;overflow:hidden"><div class="t" style="left:2.50px;top:0;font-size:11.2px;line-height:20px;color:#000;letter-spacing:-0.131px">BENMAKHLOF Achour</div></div>
<div class="t" style="left:239.93px;top:184.00px;font-size:11.15px;line-height:20px;font-family:'Liberation Sans',sans-serif;color:#000;letter-spacing:-0.181px">5097660</div>
<div class="t" style="left:323.24px;top:183.00px;font-size:11.45px;line-height:20px;font-family:'Liberation Sans',sans-serif;color:#000;letter-spacing:0.173px">Espace Conseil BBA 02 mounia</div>
<div class="t" style="left:497.00px;top:183.00px;font-size:11.2px;line-height:20px;font-family:'Liberation Sans',sans-serif;color:#000;letter-spacing:-0.160px">FS-NSD</div>
<div class="t" style="left:653.98px;top:184.00px;font-size:11.15px;line-height:20px;font-family:'Liberation Sans',sans-serif;color:#000;letter-spacing:-0.181px">10</div>
<div class="t" style="left:744.48px;top:184.00px;font-size:11.15px;line-height:20px;font-family:'Liberation Sans',sans-serif;color:#000;letter-spacing:-0.181px">10</div>
<div class="t" style="left:806.95px;top:183.00px;font-size:11.7px;line-height:20px;font-family:'Liberation Sans',sans-serif;color:#000;letter-spacing:0.427px">cloturé</div>
<div class="t" style="left:899.53px;top:183.00px;font-size:11.7px;line-height:20px;font-family:'Liberation Sans',sans-serif;color:#000;letter-spacing:0.443px">oui</div>
<div class="t" style="left:1088.82px;top:183.00px;font-size:11.35px;line-height:20px;font-family:'Liberation Sans',sans-serif;color:#000;letter-spacing:0.055px">02/01/2025</div>
<div class="t" style="left:12.74px;top:200.00px;font-size:11.1px;line-height:20px;font-family:'Liberation Sans',sans-serif;color:#000;letter-spacing:-0.332px">C1</div>
<div class="a" style="left:39px;top:201.00px;width:163px;height:20px;overflow:hidden"><div class="t" style="left:2.50px;top:0;font-size:11.0px;line-height:20px;color:#000;letter-spacing:-0.386px">SALEH HALILOU</div></div>
<div class="t" style="left:239.93px;top:201.00px;font-size:11.15px;line-height:20px;font-family:'Liberation Sans',sans-serif;color:#000;letter-spacing:-0.181px">5098064</div>
<div class="t" style="left:323.24px;top:200.00px;font-size:11.45px;line-height:20px;font-family:'Liberation Sans',sans-serif;color:#000;letter-spacing:0.173px">Espace Conseil BBA 02 mounia</div>
<div class="t" style="left:497.00px;top:200.00px;font-size:11.1px;line-height:20px;font-family:'Liberation Sans',sans-serif;color:#000;letter-spacing:-0.239px">SAV 2</div>
<div class="t" style="left:656.99px;top:201.00px;font-size:11.15px;line-height:20px;font-family:'Liberation Sans',sans-serif;color:#000;letter-spacing:-0.181px">7</div>
<div class="t" style="left:747.49px;top:201.00px;font-size:11.15px;line-height:20px;font-family:'Liberation Sans',sans-serif;color:#000;letter-spacing:-0.181px">7</div>
<div class="t" style="left:806.95px;top:200.00px;font-size:11.7px;line-height:20px;font-family:'Liberation Sans',sans-serif;color:#000;letter-spacing:0.427px">cloturé</div>
<div class="t" style="left:899.53px;top:200.00px;font-size:11.7px;line-height:20px;font-family:'Liberation Sans',sans-serif;color:#000;letter-spacing:0.443px">oui</div>
<div class="t" style="left:1088.82px;top:200.00px;font-size:11.35px;line-height:20px;font-family:'Liberation Sans',sans-serif;color:#000;letter-spacing:0.055px">08/12/2024</div>
<div class="t" style="left:12.74px;top:217.00px;font-size:11.1px;line-height:20px;font-family:'Liberation Sans',sans-serif;color:#000;letter-spacing:-0.332px">C1</div>
<div class="a" style="left:39px;top:218.00px;width:163px;height:20px;overflow:hidden"><div class="t" style="left:2.50px;top:0;font-size:11.55px;line-height:20px;color:#000;letter-spacing:0.275px">Daoud Ala eddin</div></div>
<div class="t" style="left:239.93px;top:218.00px;font-size:11.15px;line-height:20px;font-family:'Liberation Sans',sans-serif;color:#000;letter-spacing:-0.181px">5098521</div>
<div class="t" style="left:323.24px;top:217.00px;font-size:11.45px;line-height:20px;font-family:'Liberation Sans',sans-serif;color:#000;letter-spacing:0.173px">Espace Conseil BBA 02 mounia</div>
<div class="t" style="left:497.00px;top:217.00px;font-size:11.7px;line-height:20px;font-family:'Liberation Sans',sans-serif;color:#000;letter-spacing:0.506px">mebarki</div>
<div class="t" style="left:656.99px;top:218.00px;font-size:11.15px;line-height:20px;font-family:'Liberation Sans',sans-serif;color:#000;letter-spacing:-0.181px">2</div>
<div class="t" style="left:747.49px;top:218.00px;font-size:11.15px;line-height:20px;font-family:'Liberation Sans',sans-serif;color:#000;letter-spacing:-0.181px">2</div>
<div class="t" style="left:806.95px;top:217.00px;font-size:11.7px;line-height:20px;font-family:'Liberation Sans',sans-serif;color:#000;letter-spacing:0.427px">cloturé</div>
<div class="t" style="left:899.53px;top:217.00px;font-size:11.7px;line-height:20px;font-family:'Liberation Sans',sans-serif;color:#000;letter-spacing:0.443px">oui</div>
<div class="t" style="left:1088.82px;top:217.00px;font-size:11.35px;line-height:20px;font-family:'Liberation Sans',sans-serif;color:#000;letter-spacing:0.055px">18/12/2024</div>
<div class="t" style="left:12.74px;top:234.00px;font-size:11.1px;line-height:20px;font-family:'Liberation Sans',sans-serif;color:#000;letter-spacing:-0.332px">C1</div>
<div class="a" style="left:39px;top:235.00px;width:163px;height:20px;overflow:hidden"><div class="t" style="left:2.50px;top:0;font-size:11.5px;line-height:20px;color:#000;letter-spacing:0.166px">Khaldi Ali</div></div>
<div class="t" style="left:239.93px;top:235.00px;font-size:11.15px;line-height:20px;font-family:'Liberation Sans',sans-serif;color:#000;letter-spacing:-0.181px">5098614</div>
<div class="t" style="left:323.24px;top:234.00px;font-size:11.45px;line-height:20px;font-family:'Liberation Sans',sans-serif;color:#000;letter-spacing:0.173px">Espace Conseil BBA 02 mounia</div>
<div class="t" style="left:497.00px;top:234.00px;font-size:11.7px;line-height:20px;font-family:'Liberation Sans',sans-serif;color:#000;letter-spacing:0.506px">mebarki</div>
<div class="t" style="left:656.99px;top:235.00px;font-size:11.15px;line-height:20px;font-family:'Liberation Sans',sans-serif;color:#000;letter-spacing:-0.181px">5</div>
<div class="t" style="left:747.49px;top:235.00px;font-size:11.15px;line-height:20px;font-family:'Liberation Sans',sans-serif;color:#000;letter-spacing:-0.181px">4</div>
<div class="t" style="left:802.10px;top:234.00px;font-size:11.65px;line-height:20px;font-family:'Liberation Sans',sans-serif;color:#000;letter-spacing:0.390px">en cours</div>
<div class="t" style="left:897.41px;top:234.00px;font-size:11.7px;line-height:20px;font-family:'Liberation Sans',sans-serif;color:#000;letter-spacing:0.554px">non</div>
<div class="t" style="left:1088.82px;top:234.00px;font-size:11.35px;line-height:20px;font-family:'Liberation Sans',sans-serif;color:#000;letter-spacing:0.055px">16/01/2025</div>
<div class="t" style="left:1353.02px;top:234.00px;font-size:11.7px;line-height:20px;font-family:'Liberation Sans',sans-serif;color:#000;letter-spacing:0.386px">pose partielle (travaux non finis)</div>
<div class="t" style="left:12.74px;top:251.00px;font-size:11.1px;line-height:20px;font-family:'Liberation Sans',sans-serif;color:#000;letter-spacing:-0.332px">C1</div>
<div class="a" style="left:39px;top:252.00px;width:163px;height:20px;overflow:hidden"><div class="t" style="left:2.50px;top:0;font-size:11.4px;line-height:20px;color:#000;letter-spacing:0.090px">BENABIDA abd el-krim</div></div>
<div class="t" style="left:239.93px;top:252.00px;font-size:11.15px;line-height:20px;font-family:'Liberation Sans',sans-serif;color:#000;letter-spacing:-0.181px">5098663</div>
<div class="t" style="left:323.24px;top:251.00px;font-size:11.45px;line-height:20px;font-family:'Liberation Sans',sans-serif;color:#000;letter-spacing:0.173px">Espace Conseil BBA 02 mounia</div>
<div class="t" style="left:497.00px;top:251.00px;font-size:11.7px;line-height:20px;font-family:'Liberation Sans',sans-serif;color:#000;letter-spacing:0.406px">charif</div>
<div class="t" style="left:656.99px;top:252.00px;font-size:11.15px;line-height:20px;font-family:'Liberation Sans',sans-serif;color:#000;letter-spacing:-0.181px">6</div>
<div class="t" style="left:747.49px;top:252.00px;font-size:11.15px;line-height:20px;font-family:'Liberation Sans',sans-serif;color:#000;letter-spacing:-0.181px">6</div>
<div class="t" style="left:806.95px;top:251.00px;font-size:11.7px;line-height:20px;font-family:'Liberation Sans',sans-serif;color:#000;letter-spacing:0.427px">cloturé</div>
<div class="t" style="left:899.53px;top:251.00px;font-size:11.7px;line-height:20px;font-family:'Liberation Sans',sans-serif;color:#000;letter-spacing:0.443px">oui</div>
<div class="t" style="left:1088.82px;top:251.00px;font-size:11.35px;line-height:20px;font-family:'Liberation Sans',sans-serif;color:#000;letter-spacing:0.055px">14/01/2025</div>
<div class="t" style="left:12.74px;top:268.00px;font-size:11.1px;line-height:20px;font-family:'Liberation Sans',sans-serif;color:#000;letter-spacing:-0.332px">C1</div>
<div class="a" style="left:39px;top:269.00px;width:163px;height:20px;overflow:hidden"><div class="t" style="left:2.50px;top:0;font-size:11.65px;line-height:20px;color:#000;letter-spacing:0.472px">benabbas fouad</div></div>
<div class="t" style="left:239.93px;top:269.00px;font-size:11.15px;line-height:20px;font-family:'Liberation Sans',sans-serif;color:#000;letter-spacing:-0.181px">5098722</div>
<div class="t" style="left:323.24px;top:268.00px;font-size:11.45px;line-height:20px;font-family:'Liberation Sans',sans-serif;color:#000;letter-spacing:0.173px">Espace Conseil BBA 02 mounia</div>
<div class="t" style="left:497.00px;top:268.00px;font-size:11.6px;line-height:20px;font-family:'Liberation Sans',sans-serif;color:#000;letter-spacing:0.345px">Mebarki Abdennour</div>
<div class="t" style="left:653.98px;top:269.00px;font-size:11.4px;line-height:20px;font-family:'Liberation Sans',sans-serif;color:#000;letter-spacing:0.103px">11</div>
<div class="t" style="left:744.48px;top:269.00px;font-size:11.4px;line-height:20px;font-family:'Liberation Sans',sans-serif;color:#000;letter-spacing:0.103px">11</div>
<div class="t" style="left:806.95px;top:268.00px;font-size:11.7px;line-height:20px;font-family:'Liberation Sans',sans-serif;color:#000;letter-spacing:0.427px">cloturé</div>
<div class="t" style="left:899.53px;top:268.00px;font-size:11.7px;line-height:20px;font-family:'Liberation Sans',sans-serif;color:#000;letter-spacing:0.443px">oui</div>
<div class="t" style="left:1088.82px;top:268.00px;font-size:11.35px;line-height:20px;font-family:'Liberation Sans',sans-serif;color:#000;letter-spacing:0.055px">20/01/2025</div>
<div class="t" style="left:12.74px;top:285.00px;font-size:11.1px;line-height:20px;font-family:'Liberation Sans',sans-serif;color:#000;letter-spacing:-0.332px">C1</div>
<div class="a" style="left:39px;top:286.00px;width:163px;height:20px;overflow:hidden"><div class="t" style="left:2.50px;top:0;font-size:11.0px;line-height:20px;color:#000;letter-spacing:-0.362px">KHELIFI SALAH</div></div>
<div class="t" style="left:239.93px;top:286.00px;font-size:11.15px;line-height:20px;font-family:'Liberation Sans',sans-serif;color:#000;letter-spacing:-0.181px">5098738</div>
<div class="t" style="left:323.24px;top:285.00px;font-size:11.45px;line-height:20px;font-family:'Liberation Sans',sans-serif;color:#000;letter-spacing:0.173px">Espace Conseil BBA 02 mounia</div>
<div class="t" style="left:497.00px;top:285.00px;font-size:11.4px;line-height:20px;font-family:'Liberation Sans',sans-serif;color:#000;letter-spacing:0.141px">sav 01</div>
<div class="t" style="left:656.99px;top:286.00px;font-size:11.15px;line-height:20px;font-family:'Liberation Sans',sans-serif;color:#000;letter-spacing:-0.181px">8</div>
<div class="t" style="left:747.49px;top:286.00px;font-size:11.15px;line-height:20px;font-family:'Liberation Sans',sans-serif;color:#000;letter-spacing:-0.181px">7</div>
<div class="t" style="left:802.10px;top:285.00px;font-size:11.65px;line-height:20px;font-family:'Liberation Sans',sans-serif;color:#000;letter-spacing:0.390px">en cours</div>
<div class="t" style="left:897.41px;top:285.00px;font-size:11.7px;line-height:20px;font-family:'Liberation Sans',sans-serif;color:#000;letter-spacing:0.554px">non</div>
<div class="t" style="left:1088.82px;top:285.00px;font-size:11.35px;line-height:20px;font-family:'Liberation Sans',sans-serif;color:#000;letter-spacing:0.055px">15/01/2025</div>
<div class="t" style="left:1353.02px;top:285.00px;font-size:11.7px;line-height:20px;font-family:'Liberation Sans',sans-serif;color:#000;letter-spacing:0.386px">pose partielle (travaux non finis)</div>
<div class="t" style="left:12.74px;top:302.00px;font-size:11.1px;line-height:20px;font-family:'Liberation Sans',sans-serif;color:#000;letter-spacing:-0.332px">C1</div>
<div class="a" style="left:39px;top:303.00px;width:163px;height:20px;overflow:hidden"><div class="t" style="left:2.50px;top:0;font-size:11.55px;line-height:20px;color:#000;letter-spacing:0.358px">Laalaouna Hassan</div></div>
<div class="t" style="left:239.93px;top:303.00px;font-size:11.15px;line-height:20px;font-family:'Liberation Sans',sans-serif;color:#000;letter-spacing:-0.181px">5098777</div>
<div class="t" style="left:323.24px;top:302.00px;font-size:11.45px;line-height:20px;font-family:'Liberation Sans',sans-serif;color:#000;letter-spacing:0.173px">Espace Conseil BBA 02 mounia</div>
<div class="t" style="left:497.00px;top:302.00px;font-size:11.0px;line-height:20px;font-family:'Liberation Sans',sans-serif;color:#000;letter-spacing:-0.388px">FS</div>
<div class="t" style="left:656.99px;top:303.00px;font-size:11.15px;line-height:20px;font-family:'Liberation Sans',sans-serif;color:#000;letter-spacing:-0.181px">1</div>
<div class="t" style="left:747.49px;top:303.00px;font-size:11.15px;line-height:20px;font-family:'Liberation Sans',sans-serif;color:#000;letter-spacing:-0.181px">1</div>
<div class="t" style="left:806.95px;top:302.00px;font-size:11.7px;line-height:20px;font-family:'Liberation Sans',sans-serif;color:#000;letter-spacing:0.427px">cloturé</div>
<div class="t" style="left:899.53px;top:302.00px;font-size:11.7px;line-height:20px;font-family:'Liberation Sans',sans-serif;color:#000;letter-spacing:0.443px">oui</div>
<div class="t" style="left:1088.82px;top:302.00px;font-size:11.35px;line-height:20px;font-family:'Liberation Sans',sans-serif;color:#000;letter-spacing:0.055px">13/01/2025</div>
<div class="t" style="left:8.53px;top:319.00px;font-size:11.0px;line-height:20px;font-family:'Liberation Sans',sans-serif;color:#000;letter-spacing:-0.428px">NSD</div>
<div class="a" style="left:39px;top:320.00px;width:163px;height:20px;overflow:hidden"><div class="t" style="left:2.50px;top:0;font-size:11.55px;line-height:20px;color:#000;letter-spacing:0.358px">Laalaouna Hassan</div></div>
<div class="t" style="left:239.93px;top:320.00px;font-size:11.15px;line-height:20px;font-family:'Liberation Sans',sans-serif;color:#000;letter-spacing:-0.181px">5098780</div>
<div class="t" style="left:323.24px;top:319.00px;font-size:11.45px;line-height:20px;font-family:'Liberation Sans',sans-serif;color:#000;letter-spacing:0.173px">Espace Conseil BBA 02 mounia</div>
<div class="t" style="left:497.00px;top:319.00px;font-size:11.2px;line-height:20px;font-family:'Liberation Sans',sans-serif;color:#000;letter-spacing:-0.160px">FS-NSD</div>
<div class="t" style="left:656.99px;top:320.00px;font-size:11.15px;line-height:20px;font-family:'Liberation Sans',sans-serif;color:#000;letter-spacing:-0.181px">4</div>
<div class="t" style="left:747.49px;top:320.00px;font-size:11.15px;line-height:20px;font-family:'Liberation Sans',sans-serif;color:#000;letter-spacing:-0.181px">4</div>
<div class="t" style="left:806.95px;top:319.00px;font-size:11.7px;line-height:20px;font-family:'Liberation Sans',sans-serif;color:#000;letter-spacing:0.427px">cloturé</div>
<div class="t" style="left:899.53px;top:319.00px;font-size:11.7px;line-height:20px;font-family:'Liberation Sans',sans-serif;color:#000;letter-spacing:0.443px">oui</div>
<div class="t" style="left:1088.82px;top:319.00px;font-size:11.35px;line-height:20px;font-family:'Liberation Sans',sans-serif;color:#000;letter-spacing:0.055px">13/01/2025</div>
<div class="t" style="left:12.74px;top:336.00px;font-size:11.1px;line-height:20px;font-family:'Liberation Sans',sans-serif;color:#000;letter-spacing:-0.332px">C1</div>
<div class="a" style="left:39px;top:337.00px;width:163px;height:20px;overflow:hidden"><div class="t" style="left:2.50px;top:0;font-size:11.6px;line-height:20px;color:#000;letter-spacing:0.370px">Khodri noreddine</div></div>
<div class="t" style="left:239.93px;top:337.00px;font-size:11.15px;line-height:20px;font-family:'Liberation Sans',sans-serif;color:#000;letter-spacing:-0.181px">5098953</div>
<div class="t" style="left:323.24px;top:336.00px;font-size:11.45px;line-height:20px;font-family:'Liberation Sans',sans-serif;color:#000;letter-spacing:0.173px">Espace Conseil BBA 02 mounia</div>
<div class="t" style="left:497.00px;top:336.00px;font-size:11.0px;line-height:20px;font-family:'Liberation Sans',sans-serif;color:#000;letter-spacing:-0.377px">CHERIF</div>
<div class="t" style="left:656.99px;top:337.00px;font-size:11.15px;line-height:20px;font-family:'Liberation Sans',sans-serif;color:#000;letter-spacing:-0.181px">2</div>
<div class="t" style="left:747.49px;top:337.00px;font-size:11.15px;line-height:20px;font-family:'Liberation Sans',sans-serif;color:#000;letter-spacing:-0.181px">2</div>
<div class="t" style="left:806.95px;top:336.00px;font-size:11.7px;line-height:20px;font-family:'Liberation Sans',sans-serif;color:#000;letter-spacing:0.427px">cloturé</div>
<div class="t" style="left:899.53px;top:336.00px;font-size:11.7px;line-height:20px;font-family:'Liberation Sans',sans-serif;color:#000;letter-spacing:0.443px">oui</div>
<div class="t" style="left:1088.82px;top:336.00px;font-size:11.35px;line-height:20px;font-family:'Liberation Sans',sans-serif;color:#000;letter-spacing:0.055px">06/03/2025</div>
<div class="t" style="left:12.74px;top:353.00px;font-size:11.1px;line-height:20px;font-family:'Liberation Sans',sans-serif;color:#000;letter-spacing:-0.332px">C1</div>
<div class="a" style="left:39px;top:354.00px;width:163px;height:20px;overflow:hidden"><div class="t" style="left:2.50px;top:0;font-size:11.0px;line-height:20px;color:#000;letter-spacing:-0.400px">BELOUARE CHAKIB</div></div>
<div class="t" style="left:239.93px;top:354.00px;font-size:11.15px;line-height:20px;font-family:'Liberation Sans',sans-serif;color:#000;letter-spacing:-0.181px">5099108</div>
<div class="t" style="left:323.24px;top:353.00px;font-size:11.45px;line-height:20px;font-family:'Liberation Sans',sans-serif;color:#000;letter-spacing:0.173px">Espace Conseil BBA 02 mounia</div>
<div class="t" style="left:497.00px;top:353.00px;font-size:11.0px;line-height:20px;font-family:'Liberation Sans',sans-serif;color:#000;letter-spacing:-0.388px">FS</div>
<div class="t" style="left:656.99px;top:354.00px;font-size:11.15px;line-height:20px;font-family:'Liberation Sans',sans-serif;color:#000;letter-spacing:-0.181px">6</div>
<div class="t" style="left:747.49px;top:354.00px;font-size:11.15px;line-height:20px;font-family:'Liberation Sans',sans-serif;color:#000;letter-spacing:-0.181px">6</div>
<div class="t" style="left:806.95px;top:353.00px;font-size:11.7px;line-height:20px;font-family:'Liberation Sans',sans-serif;color:#000;letter-spacing:0.427px">cloturé</div>
<div class="t" style="left:899.53px;top:353.00px;font-size:11.7px;line-height:20px;font-family:'Liberation Sans',sans-serif;color:#000;letter-spacing:0.443px">oui</div>
<div class="t" style="left:1088.82px;top:353.00px;font-size:11.35px;line-height:20px;font-family:'Liberation Sans',sans-serif;color:#000;letter-spacing:0.055px">26/01/2025</div>
<div class="t" style="left:12.74px;top:370.00px;font-size:11.1px;line-height:20px;font-family:'Liberation Sans',sans-serif;color:#000;letter-spacing:-0.332px">C1</div>
<div class="a" style="left:39px;top:371.00px;width:163px;height:20px;overflow:hidden"><div class="t" style="left:2.50px;top:0;font-size:11.55px;line-height:20px;color:#000;letter-spacing:0.275px">Benfradj Habiba</div></div>
<div class="t" style="left:239.93px;top:371.00px;font-size:11.15px;line-height:20px;font-family:'Liberation Sans',sans-serif;color:#000;letter-spacing:-0.181px">5099322</div>
<div class="t" style="left:323.24px;top:370.00px;font-size:11.45px;line-height:20px;font-family:'Liberation Sans',sans-serif;color:#000;letter-spacing:0.173px">Espace Conseil BBA 02 mounia</div>
<div class="t" style="left:497.00px;top:370.00px;font-size:11.6px;line-height:20px;font-family:'Liberation Sans',sans-serif;color:#000;letter-spacing:0.345px">Mebarki Abdennour</div>
<div class="t" style="left:653.98px;top:371.00px;font-size:11.15px;line-height:20px;font-family:'Liberation Sans',sans-serif;color:#000;letter-spacing:-0.181px">24</div>
<div class="t" style="left:744.48px;top:371.00px;font-size:11.15px;line-height:20px;font-family:'Liberation Sans',sans-serif;color:#000;letter-spacing:-0.181px">24</div>
<div class="t" style="left:806.95px;top:370.00px;font-size:11.7px;line-height:20px;font-family:'Liberation Sans',sans-serif;color:#000;letter-spacing:0.427px">cloturé</div>
<div class="t" style="left:899.53px;top:370.00px;font-size:11.7px;line-height:20px;font-family:'Liberation Sans',sans-serif;color:#000;letter-spacing:0.443px">oui</div>
<div class="t" style="left:1088.82px;top:370.00px;font-size:11.35px;line-height:20px;font-family:'Liberation Sans',sans-serif;color:#000;letter-spacing:0.055px">16/02/2025</div>
<div class="t" style="left:12.74px;top:387.00px;font-size:11.1px;line-height:20px;font-family:'Liberation Sans',sans-serif;color:#000;letter-spacing:-0.332px">C1</div>
<div class="a" style="left:39px;top:388.00px;width:163px;height:20px;overflow:hidden"><div class="t" style="left:2.50px;top:0;font-size:11.6px;line-height:20px;color:#000;letter-spacing:0.315px">Sedjar farouk</div></div>
<div class="t" style="left:239.93px;top:388.00px;font-size:11.15px;line-height:20px;font-family:'Liberation Sans',sans-serif;color:#000;letter-spacing:-0.181px">5099498</div>
<div class="t" style="left:323.24px;top:387.00px;font-size:11.45px;line-height:20px;font-family:'Liberation Sans',sans-serif;color:#000;letter-spacing:0.173px">Espace Conseil BBA 02 mounia</div>
<div class="t" style="left:497.00px;top:387.00px;font-size:11.6px;line-height:20px;font-family:'Liberation Sans',sans-serif;color:#000;letter-spacing:0.345px">Mebarki Abdennour</div>
<div class="t" style="left:656.99px;top:388.00px;font-size:11.15px;line-height:20px;font-family:'Liberation Sans',sans-serif;color:#000;letter-spacing:-0.181px">6</div>
<div class="t" style="left:747.49px;top:388.00px;font-size:11.15px;line-height:20px;font-family:'Liberation Sans',sans-serif;color:#000;letter-spacing:-0.181px">6</div>
<div class="t" style="left:806.95px;top:387.00px;font-size:11.7px;line-height:20px;font-family:'Liberation Sans',sans-serif;color:#000;letter-spacing:0.427px">cloturé</div>
<div class="t" style="left:899.53px;top:387.00px;font-size:11.7px;line-height:20px;font-family:'Liberation Sans',sans-serif;color:#000;letter-spacing:0.443px">oui</div>
<div class="t" style="left:1088.82px;top:387.00px;font-size:11.35px;line-height:20px;font-family:'Liberation Sans',sans-serif;color:#000;letter-spacing:0.055px">16/01/2025</div>
<div class="t" style="left:12.74px;top:404.00px;font-size:11.1px;line-height:20px;font-family:'Liberation Sans',sans-serif;color:#000;letter-spacing:-0.332px">C1</div>
<div class="a" style="left:39px;top:405.00px;width:163px;height:20px;overflow:hidden"><div class="t" style="left:2.50px;top:0;font-size:11.55px;line-height:20px;color:#000;letter-spacing:0.313px">Benrabh Farouk</div></div>
<div class="t" style="left:239.93px;top:405.00px;font-size:11.15px;line-height:20px;font-family:'Liberation Sans',sans-serif;color:#000;letter-spacing:-0.181px">5099676</div>
<div class="t" style="left:323.24px;top:404.00px;font-size:11.45px;line-height:20px;font-family:'Liberation Sans',sans-serif;color:#000;letter-spacing:0.173px">Espace Conseil BBA 02 mounia</div>
<div class="t" style="left:497.00px;top:404.00px;font-size:11.6px;line-height:20px;font-family:'Liberation Sans',sans-serif;color:#000;letter-spacing:0.345px">Mebarki Abdennour</div>
<div class="t" style="left:653.98px;top:405.00px;font-size:11.15px;line-height:20px;font-family:'Liberation Sans',sans-serif;color:#000;letter-spacing:-0.181px">18</div>
<div class="t" style="left:744.48px;top:405.00px;font-size:11.15px;line-height:20px;font-family:'Liberation Sans',sans-serif;color:#000;letter-spacing:-0.181px">18</div>
<div class="t" style="left:802.10px;top:404.00px;font-size:11.65px;line-height:20px;font-family:'Liberation Sans',sans-serif;color:#000;letter-spacing:0.390px">en cours</div>
<div class="t" style="left:897.41px;top:404.00px;font-size:11.7px;line-height:20px;font-family:'Liberation Sans',sans-serif;color:#000;letter-spacing:0.554px">non</div>
<div class="t" style="left:1088.82px;top:404.00px;font-size:11.35px;line-height:20px;font-family:'Liberation Sans',sans-serif;color:#000;letter-spacing:0.055px">16/01/2025</div>
<div class="t" style="left:12.74px;top:421.00px;font-size:11.1px;line-height:20px;font-family:'Liberation Sans',sans-serif;color:#000;letter-spacing:-0.332px">C1</div>
<div class="a" style="left:39px;top:422.00px;width:163px;height:20px;overflow:hidden"><div class="t" style="left:2.50px;top:0;font-size:11.6px;line-height:20px;color:#000;letter-spacing:0.392px">Bengeudoug Mahmoud</div></div>
<div class="t" style="left:239.93px;top:422.00px;font-size:11.15px;line-height:20px;font-family:'Liberation Sans',sans-serif;color:#000;letter-spacing:-0.181px">5099761</div>
<div class="t" style="left:323.24px;top:421.00px;font-size:11.45px;line-height:20px;font-family:'Liberation Sans',sans-serif;color:#000;letter-spacing:0.173px">Espace Conseil BBA 02 mounia</div>
<div class="t" style="left:497.00px;top:421.00px;font-size:11.7px;line-height:20px;font-family:'Liberation Sans',sans-serif;color:#000;letter-spacing:0.506px">mebarki</div>
<div class="t" style="left:653.98px;top:422.00px;font-size:11.15px;line-height:20px;font-family:'Liberation Sans',sans-serif;color:#000;letter-spacing:-0.181px">14</div>
<div class="t" style="left:744.48px;top:422.00px;font-size:11.15px;line-height:20px;font-family:'Liberation Sans',sans-serif;color:#000;letter-spacing:-0.181px">14</div>
<div class="t" style="left:816.47px;top:421.00px;font-size:11.45px;line-height:20px;font-family:'Liberation Sans',sans-serif;color:#000;letter-spacing:0.150px">Fini</div>
<div class="t" style="left:897.41px;top:421.00px;font-size:11.7px;line-height:20px;font-family:'Liberation Sans',sans-serif;color:#000;letter-spacing:0.554px">non</div>
<div class="t" style="left:1088.82px;top:421.00px;font-size:11.35px;line-height:20px;font-family:'Liberation Sans',sans-serif;color:#000;letter-spacing:0.055px">18/02/2025</div>
<div class="t" style="left:1406.72px;top:421.00px;font-size:11.6px;line-height:20px;font-family:'Liberation Sans',sans-serif;color:#000;letter-spacing:0.296px">Client absent</div>
<div class="t" style="left:12.74px;top:438.00px;font-size:11.1px;line-height:20px;font-family:'Liberation Sans',sans-serif;color:#000;letter-spacing:-0.332px">C1</div>
<div class="a" style="left:39px;top:439.00px;width:163px;height:20px;overflow:hidden"><div class="t" style="left:2.50px;top:0;font-size:11.6px;line-height:20px;color:#000;letter-spacing:0.383px">Mebarkia moustafa</div></div>
<div class="t" style="left:239.93px;top:439.00px;font-size:11.15px;line-height:20px;font-family:'Liberation Sans',sans-serif;color:#000;letter-spacing:-0.181px">5099884</div>
<div class="t" style="left:323.24px;top:438.00px;font-size:11.45px;line-height:20px;font-family:'Liberation Sans',sans-serif;color:#000;letter-spacing:0.173px">Espace Conseil BBA 02 mounia</div>
<div class="t" style="left:497.00px;top:438.00px;font-size:11.45px;line-height:20px;font-family:'Liberation Sans',sans-serif;color:#000;letter-spacing:0.209px">sav 2</div>
<div class="t" style="left:656.99px;top:439.00px;font-size:11.15px;line-height:20px;font-family:'Liberation Sans',sans-serif;color:#000;letter-spacing:-0.181px">4</div>
<div class="t" style="left:747.49px;top:439.00px;font-size:11.15px;line-height:20px;font-family:'Liberation Sans',sans-serif;color:#000;letter-spacing:-0.181px">4</div>
<div class="t" style="left:806.95px;top:438.00px;font-size:11.7px;line-height:20px;font-family:'Liberation Sans',sans-serif;color:#000;letter-spacing:0.427px">cloturé</div>
<div class="t" style="left:899.53px;top:438.00px;font-size:11.7px;line-height:20px;font-family:'Liberation Sans',sans-serif;color:#000;letter-spacing:0.443px">oui</div>
<div class="t" style="left:1088.82px;top:438.00px;font-size:11.35px;line-height:20px;font-family:'Liberation Sans',sans-serif;color:#000;letter-spacing:0.055px">20/02/2025</div>
<div class="t" style="left:12.74px;top:455.00px;font-size:11.1px;line-height:20px;font-family:'Liberation Sans',sans-serif;color:#000;letter-spacing:-0.332px">C1</div>
<div class="a" style="left:39px;top:456.00px;width:163px;height:20px;overflow:hidden"><div class="t" style="left:2.50px;top:0;font-size:11.55px;line-height:20px;color:#000;letter-spacing:0.297px">Mehtal walid</div></div>
<div class="t" style="left:239.93px;top:456.00px;font-size:11.15px;line-height:20px;font-family:'Liberation Sans',sans-serif;color:#000;letter-spacing:-0.181px">5100017</div>
<div class="t" style="left:323.24px;top:455.00px;font-size:11.45px;line-height:20px;font-family:'Liberation Sans',sans-serif;color:#000;letter-spacing:0.173px">Espace Conseil BBA 02 mounia</div>
<div class="t" style="left:497.00px;top:455.00px;font-size:11.6px;line-height:20px;font-family:'Liberation Sans',sans-serif;color:#000;letter-spacing:0.345px">Mebarki Abdennour</div>
<div class="t" style="left:656.99px;top:456.00px;font-size:11.15px;line-height:20px;font-family:'Liberation Sans',sans-serif;color:#000;letter-spacing:-0.181px">5</div>
<div class="t" style="left:747.49px;top:456.00px;font-size:11.15px;line-height:20px;font-family:'Liberation Sans',sans-serif;color:#000;letter-spacing:-0.181px">5</div>
<div class="t" style="left:816.47px;top:455.00px;font-size:11.45px;line-height:20px;font-family:'Liberation Sans',sans-serif;color:#000;letter-spacing:0.150px">Fini</div>
<div class="t" style="left:897.41px;top:455.00px;font-size:11.7px;line-height:20px;font-family:'Liberation Sans',sans-serif;color:#000;letter-spacing:0.554px">non</div>
<div class="t" style="left:1088.82px;top:455.00px;font-size:11.35px;line-height:20px;font-family:'Liberation Sans',sans-serif;color:#000;letter-spacing:0.055px">24/02/2025</div>
<div class="t" style="left:1406.72px;top:455.00px;font-size:11.6px;line-height:20px;font-family:'Liberation Sans',sans-serif;color:#000;letter-spacing:0.296px">Client absent</div>
<div class="t" style="left:12.74px;top:472.00px;font-size:11.1px;line-height:20px;font-family:'Liberation Sans',sans-serif;color:#000;letter-spacing:-0.332px">C1</div>
<div class="a" style="left:39px;top:473.00px;width:163px;height:20px;overflow:hidden"><div class="t" style="left:2.50px;top:0;font-size:11.0px;line-height:20px;color:#000;letter-spacing:-0.393px">SHILI MOHAMED</div></div>
<div class="t" style="left:239.93px;top:473.00px;font-size:11.15px;line-height:20px;font-family:'Liberation Sans',sans-serif;color:#000;letter-spacing:-0.181px">5100535</div>
<div class="t" style="left:323.24px;top:472.00px;font-size:11.45px;line-height:20px;font-family:'Liberation Sans',sans-serif;color:#000;letter-spacing:0.173px">Espace Conseil BBA 02 mounia</div>
<div class="t" style="left:497.00px;top:472.00px;font-size:11.7px;line-height:20px;font-family:'Liberation Sans',sans-serif;color:#000;letter-spacing:0.506px">mebarki</div>
<div class="t" style="left:656.99px;top:473.00px;font-size:11.15px;line-height:20px;font-family:'Liberation Sans',sans-serif;color:#000;letter-spacing:-0.181px">7</div>
<div class="t" style="left:747.49px;top:473.00px;font-size:11.15px;line-height:20px;font-family:'Liberation Sans',sans-serif;color:#000;letter-spacing:-0.181px">6</div>
<div class="t" style="left:806.95px;top:472.00px;font-size:11.7px;line-height:20px;font-family:'Liberation Sans',sans-serif;color:#000;letter-spacing:0.427px">cloturé</div>
<div class="t" style="left:899.53px;top:472.00px;font-size:11.7px;line-height:20px;font-family:'Liberation Sans',sans-serif;color:#000;letter-spacing:0.443px">oui</div>
<div class="t" style="left:1088.82px;top:472.00px;font-size:11.35px;line-height:20px;font-family:'Liberation Sans',sans-serif;color:#000;letter-spacing:0.055px">24/02/2025</div>
<div class="t" style="left:12.74px;top:489.00px;font-size:11.1px;line-height:20px;font-family:'Liberation Sans',sans-serif;color:#000;letter-spacing:-0.332px">C1</div>
<div class="a" style="left:39px;top:490.00px;width:163px;height:20px;overflow:hidden"><div class="t" style="left:2.50px;top:0;font-size:11.55px;line-height:20px;color:#000;letter-spacing:0.304px">Deghache Halim</div></div>
<div class="t" style="left:239.93px;top:490.00px;font-size:11.2px;line-height:20px;font-family:'Liberation Sans',sans-serif;color:#000;letter-spacing:-0.090px">5100611</div>
<div class="t" style="left:323.24px;top:489.00px;font-size:11.45px;line-height:20px;font-family:'Liberation Sans',sans-serif;color:#000;letter-spacing:0.173px">Espace Conseil BBA 02 mounia</div>
<div class="t" style="left:497.00px;top:489.00px;font-size:11.45px;line-height:20px;font-family:'Liberation Sans',sans-serif;color:#000;letter-spacing:0.209px">sav 1</div>
<div class="t" style="left:653.98px;top:490.00px;font-size:11.15px;line-height:20px;font-family:'Liberation Sans',sans-serif;color:#000;letter-spacing:-0.181px">12</div>
<div class="t" style="left:744.48px;top:490.00px;font-size:11.15px;line-height:20px;font-family:'Liberation Sans',sans-serif;color:#000;letter-spacing:-0.181px">12</div>
<div class="t" style="left:816.47px;top:489.00px;font-size:11.45px;line-height:20px;font-family:'Liberation Sans',sans-serif;color:#000;letter-spacing:0.150px">Fini</div>
<div class="t" style="left:897.41px;top:489.00px;font-size:11.7px;line-height:20px;font-family:'Liberation Sans',sans-serif;color:#000;letter-spacing:0.554px">non</div>
<div class="t" style="left:1088.82px;top:489.00px;font-size:11.35px;line-height:20px;font-family:'Liberation Sans',sans-serif;color:#000;letter-spacing:0.055px">30/03/2025</div>
<div class="t" style="left:1397.41px;top:489.00px;font-size:11.65px;line-height:20px;font-family:'Liberation Sans',sans-serif;color:#000;letter-spacing:0.441px">non receptioneé</div>
<div class="t" style="left:12.74px;top:506.00px;font-size:11.1px;line-height:20px;font-family:'Liberation Sans',sans-serif;color:#000;letter-spacing:-0.332px">C1</div>
<div class="a" style="left:39px;top:507.00px;width:163px;height:20px;overflow:hidden"><div class="t" style="left:2.50px;top:0;font-size:11.55px;line-height:20px;color:#000;letter-spacing:0.348px">Mosqué Aicha Omlmomnine</div></div>
<div class="t" style="left:239.93px;top:507.00px;font-size:11.15px;line-height:20px;font-family:'Liberation Sans',sans-serif;color:#000;letter-spacing:-0.181px">5100724</div>
<div class="t" style="left:323.24px;top:506.00px;font-size:11.45px;line-height:20px;font-family:'Liberation Sans',sans-serif;color:#000;letter-spacing:0.173px">Espace Conseil BBA 02 mounia</div>
<div class="t" style="left:497.00px;top:506.00px;font-size:11.6px;line-height:20px;font-family:'Liberation Sans',sans-serif;color:#000;letter-spacing:0.345px">Mebarki Abdennour</div>
<div class="t" style="left:653.98px;top:507.00px;font-size:11.15px;line-height:20px;font-family:'Liberation Sans',sans-serif;color:#000;letter-spacing:-0.181px">55</div>
<div class="t" style="left:744.48px;top:507.00px;font-size:11.15px;line-height:20px;font-family:'Liberation Sans',sans-serif;color:#000;letter-spacing:-0.181px">55</div>
<div class="t" style="left:806.95px;top:506.00px;font-size:11.7px;line-height:20px;font-family:'Liberation Sans',sans-serif;color:#000;letter-spacing:0.427px">cloturé</div>
<div class="t" style="left:899.53px;top:506.00px;font-size:11.7px;line-height:20px;font-family:'Liberation Sans',sans-serif;color:#000;letter-spacing:0.443px">oui</div>
<div class="t" style="left:1088.82px;top:506.00px;font-size:11.35px;line-height:20px;font-family:'Liberation Sans',sans-serif;color:#000;letter-spacing:0.055px">28/01/2025</div>
<div class="t" style="left:12.74px;top:523.00px;font-size:11.1px;line-height:20px;font-family:'Liberation Sans',sans-serif;color:#000;letter-spacing:-0.332px">C1</div>
<div class="a" style="left:39px;top:524.00px;width:163px;height:20px;overflow:hidden"><div class="t" style="left:2.50px;top:0;font-size:11.6px;line-height:20px;color:#000;letter-spacing:0.394px">Chemali saaddek</div></div>
<div class="t" style="left:239.93px;top:524.00px;font-size:11.15px;line-height:20px;font-family:'Liberation Sans',sans-serif;color:#000;letter-spacing:-0.181px">5100870</div>
<div class="t" style="left:323.24px;top:523.00px;font-size:11.45px;line-height:20px;font-family:'Liberation Sans',sans-serif;color:#000;letter-spacing:0.173px">Espace Conseil BBA 02 mounia</div>
<div class="t" style="left:497.00px;top:523.00px;font-size:11.0px;line-height:20px;font-family:'Liberation Sans',sans-serif;color:#000;letter-spacing:-0.388px">FS</div>
<div class="t" style="left:656.99px;top:524.00px;font-size:11.15px;line-height:20px;font-family:'Liberation Sans',sans-serif;color:#000;letter-spacing:-0.181px">1</div>
<div class="t" style="left:747.49px;top:524.00px;font-size:11.15px;line-height:20px;font-family:'Liberation Sans',sans-serif;color:#000;letter-spacing:-0.181px">1</div>
<div class="t" style="left:806.95px;top:523.00px;font-size:11.7px;line-height:20px;font-family:'Liberation Sans',sans-serif;color:#000;letter-spacing:0.427px">cloturé</div>
<div class="t" style="left:899.53px;top:523.00px;font-size:11.7px;line-height:20px;font-family:'Liberation Sans',sans-serif;color:#000;letter-spacing:0.443px">oui</div>
<div class="t" style="left:1088.82px;top:523.00px;font-size:11.35px;line-height:20px;font-family:'Liberation Sans',sans-serif;color:#000;letter-spacing:0.055px">23/01/2025</div>
<div class="t" style="left:12.74px;top:540.00px;font-size:11.1px;line-height:20px;font-family:'Liberation Sans',sans-serif;color:#000;letter-spacing:-0.332px">C1</div>
<div class="a" style="left:39px;top:541.00px;width:163px;height:20px;overflow:hidden"><div class="t" style="left:2.50px;top:0;font-size:11.5px;line-height:20px;color:#000;letter-spacing:0.216px">Harem Rida</div></div>
<div class="t" style="left:239.93px;top:541.00px;font-size:11.15px;line-height:20px;font-family:'Liberation Sans',sans-serif;color:#000;letter-spacing:-0.181px">5100944</div>
<div class="t" style="left:323.24px;top:540.00px;font-size:11.45px;line-height:20px;font-family:'Liberation Sans',sans-serif;color:#000;letter-spacing:0.173px">Espace Conseil BBA 02 mounia</div>
<div class="t" style="left:497.00px;top:540.00px;font-size:11.0px;line-height:20px;font-family:'Liberation Sans',sans-serif;color:#000;letter-spacing:-0.377px">CHERIF</div>
<div class="t" style="left:656.99px;top:541.00px;font-size:11.15px;line-height:20px;font-family:'Liberation Sans',sans-serif;color:#000;letter-spacing:-0.181px">7</div>
<div class="t" style="left:747.49px;top:541.00px;font-size:11.15px;line-height:20px;font-family:'Liberation Sans',sans-serif;color:#000;letter-spacing:-0.181px">1</div>
<div class="t" style="left:802.10px;top:540.00px;font-size:11.65px;line-height:20px;font-family:'Liberation Sans',sans-serif;color:#000;letter-spacing:0.390px">en cours</div>
<div class="t" style="left:897.41px;top:540.00px;font-size:11.7px;line-height:20px;font-family:'Liberation Sans',sans-serif;color:#000;letter-spacing:0.554px">non</div>
<div class="t" style="left:1088.82px;top:540.00px;font-size:11.35px;line-height:20px;font-family:'Liberation Sans',sans-serif;color:#000;letter-spacing:0.055px">27/02/2025</div>
<div class="t" style="left:1285.30px;top:540.00px;font-size:11.65px;line-height:20px;font-family:'Liberation Sans',sans-serif;color:#000;letter-spacing:0.360px">pose partielle, reste 1 menuisierie, pose prévue m</div>
<div class="t" style="left:239.93px;top:558.00px;font-size:11.15px;line-height:20px;font-family:'Liberation Sans',sans-serif;color:#000;letter-spacing:-0.181px">5101010</div>
<div class="t" style="left:323.24px;top:557.00px;font-size:11.45px;line-height:20px;font-family:'Liberation Sans',sans-serif;color:#000;letter-spacing:0.173px">Espace Conseil BBA 02 mounia</div>
<div class="t" style="left:497.00px;top:557.00px;font-size:11.7px;line-height:20px;font-family:'Liberation Sans',sans-serif;color:#000;letter-spacing:0.506px">mebarki</div>
<div class="t" style="left:656.99px;top:558.00px;font-size:11.15px;line-height:20px;font-family:'Liberation Sans',sans-serif;color:#000;letter-spacing:-0.181px">2</div>
<div class="t" style="left:747.49px;top:558.00px;font-size:11.15px;line-height:20px;font-family:'Liberation Sans',sans-serif;color:#000;letter-spacing:-0.181px">2</div>
<div class="t" style="left:806.95px;top:557.00px;font-size:11.7px;line-height:20px;font-family:'Liberation Sans',sans-serif;color:#000;letter-spacing:0.427px">cloturé</div>
<div class="t" style="left:899.53px;top:557.00px;font-size:11.7px;line-height:20px;font-family:'Liberation Sans',sans-serif;color:#000;letter-spacing:0.443px">oui</div>
<div class="t" style="left:1088.82px;top:557.00px;font-size:11.35px;line-height:20px;font-family:'Liberation Sans',sans-serif;color:#000;letter-spacing:0.055px">27/02/2025</div>
<div class="a" style="left:0px;top:17px;width:1555px;height:1px;background:#000"></div>
<div class="a" style="left:0px;top:65px;width:1555px;height:1px;background:#000"></div>
<div class="a" style="left:0px;top:82px;width:1555px;height:1px;background:#000"></div>
<div class="a" style="left:0px;top:99px;width:1555px;height:1px;background:#000"></div>
<div class="a" style="left:0px;top:116px;width:1555px;height:1px;background:#000"></div>
<div class="a" style="left:0px;top:133px;width:1555px;height:1px;background:#000"></div>
<div class="a" style="left:0px;top:150px;width:1555px;height:1px;background:#000"></div>
<div class="a" style="left:0px;top:167px;width:1555px;height:1px;background:#000"></div>
<div class="a" style="left:0px;top:184px;width:1555px;height:1px;background:#000"></div>
<div class="a" style="left:0px;top:201px;width:1555px;height:1px;background:#000"></div>
<div class="a" style="left:0px;top:218px;width:1555px;height:1px;background:#000"></div>
<div class="a" style="left:0px;top:235px;width:1555px;height:1px;background:#000"></div>
<div class="a" style="left:0px;top:252px;width:1555px;height:1px;background:#000"></div>
<div class="a" style="left:0px;top:269px;width:1555px;height:1px;background:#000"></div>
<div class="a" style="left:0px;top:286px;width:1555px;height:1px;background:#000"></div>
<div class="a" style="left:0px;top:303px;width:1555px;height:1px;background:#000"></div>
<div class="a" style="left:0px;top:320px;width:1555px;height:1px;background:#000"></div>
<div class="a" style="left:0px;top:337px;width:1555px;height:1px;background:#000"></div>
<div class="a" style="left:0px;top:354px;width:1555px;height:1px;background:#000"></div>
<div class="a" style="left:0px;top:371px;width:1555px;height:1px;background:#000"></div>
<div class="a" style="left:0px;top:388px;width:1555px;height:1px;background:#000"></div>
<div class="a" style="left:0px;top:405px;width:1555px;height:1px;background:#000"></div>
<div class="a" style="left:0px;top:422px;width:1555px;height:1px;background:#000"></div>
<div class="a" style="left:0px;top:439px;width:1555px;height:1px;background:#000"></div>
<div class="a" style="left:0px;top:456px;width:1555px;height:1px;background:#000"></div>
<div class="a" style="left:0px;top:473px;width:1555px;height:1px;background:#000"></div>
<div class="a" style="left:0px;top:490px;width:1555px;height:1px;background:#000"></div>
<div class="a" style="left:0px;top:507px;width:1555px;height:1px;background:#000"></div>
<div class="a" style="left:0px;top:524px;width:1555px;height:1px;background:#000"></div>
<div class="a" style="left:0px;top:541px;width:1555px;height:1px;background:#000"></div>
<div class="a" style="left:0px;top:558px;width:1555px;height:1px;background:#000"></div>
<div class="a" style="left:38px;top:17px;width:1px;height:547px;background:#000"></div>
<div class="a" style="left:202px;top:17px;width:1px;height:547px;background:#000"></div>
<div class="a" style="left:318px;top:17px;width:1px;height:547px;background:#000"></div>
<div class="a" style="left:494px;top:17px;width:1px;height:547px;background:#000"></div>
<div class="a" style="left:610px;top:17px;width:1px;height:547px;background:#000"></div>
<div class="a" style="left:709px;top:17px;width:1px;height:547px;background:#000"></div>
<div class="a" style="left:791px;top:17px;width:1px;height:547px;background:#000"></div>
<div class="a" style="left:860px;top:17px;width:1px;height:547px;background:#000"></div>
<div class="a" style="left:957px;top:17px;width:1px;height:547px;background:#000"></div>
<div class="a" style="left:1277px;top:17px;width:1px;height:547px;background:#000"></div>
<div class="t" style="left:6.63px;top:25.00px;font-size:12.3px;line-height:20px;font-family:'Liberation Serif',serif;color:#000;font-weight:bold">Type</div>
<div class="t" style="left:4.81px;top:41.00px;font-size:12.3px;line-height:20px;font-family:'Liberation Serif',serif;color:#000;font-weight:bold">CMD</div>
<div class="t" style="left:83.60px;top:33.00px;font-size:12.3px;line-height:20px;font-family:'Liberation Serif',serif;color:#000;font-weight:bold">Nom du client</div>
<div class="t" style="left:221.65px;top:33.00px;font-size:12.3px;line-height:20px;font-family:'Liberation Serif',serif;color:#000;font-weight:bold">N° Commande</div>
<div class="t" style="left:368.75px;top:33.00px;font-size:12.3px;line-height:20px;font-family:'Liberation Serif',serif;color:#000;font-weight:bold">Espace conseil</div>
<div class="t" style="left:503.26px;top:33.00px;font-size:12.3px;line-height:20px;font-family:'Liberation Serif',serif;color:#000;font-weight:bold">Entreprise de pose</div>
<div class="t" style="left:616.62px;top:25.00px;font-size:12.3px;line-height:20px;font-family:'Liberation Serif',serif;color:#000;font-weight:bold">Qnt menuiseries</div>
<div class="t" style="left:637.51px;top:41.00px;font-size:12.3px;line-height:20px;font-family:'Liberation Serif',serif;color:#000;font-weight:bold">Vendues</div>
<div class="t" style="left:740.25px;top:17.00px;font-size:12.3px;line-height:20px;font-family:'Liberation Serif',serif;color:#000;font-weight:bold">Qnt</div>
<div class="t" style="left:719.41px;top:33.00px;font-size:12.3px;line-height:20px;font-family:'Liberation Serif',serif;color:#000;font-weight:bold">menuiseries</div>
<div class="t" style="left:738.55px;top:49.00px;font-size:12.3px;line-height:20px;font-family:'Liberation Serif',serif;color:#000;font-weight:bold">Posé</div>
<div class="t" style="left:809.94px;top:33.00px;font-size:12.3px;line-height:20px;font-family:'Liberation Serif',serif;color:#000;font-weight:bold">Statut</div>
<div class="t" style="left:867.10px;top:33.00px;font-size:12.3px;line-height:20px;font-family:'Liberation Serif',serif;color:#000;font-weight:bold">PV de réception</div>
<div class="t" style="left:1106.23px;top:33.00px;font-size:12.3px;line-height:20px;font-family:'Liberation Serif',serif;color:#000;font-weight:bold">date</div>
<div class="t" style="left:1433.61px;top:33.00px;font-size:12.3px;line-height:20px;font-family:'Liberation Serif',serif;color:#000;font-weight:bold">obs</div>
<div class="a" style="left:21px;top:47px;width:17px;height:17px;background:#f3f5f8;border:1px solid #b6b6b6"></div>
<svg class="a" style="left:25px;top:54px" width="8" height="4" viewBox="0 0 8 4"><path d="M0 0 H8 L4 4 Z" fill="#5a5a5a"/></svg>
<div class="a" style="left:185px;top:47px;width:17px;height:17px;background:#f3f5f8;border:1px solid #b6b6b6"></div>
<svg class="a" style="left:189px;top:54px" width="8" height="4" viewBox="0 0 8 4"><path d="M0 0 H8 L4 4 Z" fill="#5a5a5a"/></svg>
<div class="a" style="left:301px;top:47px;width:17px;height:17px;background:#f3f5f8;border:1px solid #b6b6b6"></div>
<svg class="a" style="left:303px;top:49px" width="13" height="13" viewBox="0 0 13 13"><path d="M1.5 8 H7.5 L4.5 11 Z" fill="#5a5a5a"/><path d="M10 11 V2 M8.2 3.8 L10 2 L11.8 3.8" fill="none" stroke="#5a5a5a" stroke-width="1"/></svg>
<div class="a" style="left:477px;top:47px;width:17px;height:17px;background:#f3f5f8;border:1px solid #b6b6b6"></div>
<svg class="a" style="left:481px;top:54px" width="8" height="4" viewBox="0 0 8 4"><path d="M0 0 H8 L4 4 Z" fill="#5a5a5a"/></svg>
<div class="a" style="left:593px;top:47px;width:17px;height:17px;background:#f3f5f8;border:1px solid #b6b6b6"></div>
<svg class="a" style="left:597px;top:54px" width="8" height="4" viewBox="0 0 8 4"><path d="M0 0 H8 L4 4 Z" fill="#5a5a5a"/></svg>
<div class="a" style="left:692px;top:47px;width:17px;height:17px;background:#f3f5f8;border:1px solid #b6b6b6"></div>
<svg class="a" style="left:696px;top:54px" width="8" height="4" viewBox="0 0 8 4"><path d="M0 0 H8 L4 4 Z" fill="#5a5a5a"/></svg>
<div class="a" style="left:774px;top:47px;width:17px;height:17px;background:#f3f5f8;border:1px solid #b6b6b6"></div>
<svg class="a" style="left:778px;top:54px" width="8" height="4" viewBox="0 0 8 4"><path d="M0 0 H8 L4 4 Z" fill="#5a5a5a"/></svg>
<div class="a" style="left:843px;top:47px;width:17px;height:17px;background:#f3f5f8;border:1px solid #b6b6b6"></div>
<svg class="a" style="left:847px;top:54px" width="8" height="4" viewBox="0 0 8 4"><path d="M0 0 H8 L4 4 Z" fill="#5a5a5a"/></svg>
<div class="a" style="left:940px;top:47px;width:17px;height:17px;background:#f3f5f8;border:1px solid #b6b6b6"></div>
<svg class="a" style="left:944px;top:54px" width="8" height="4" viewBox="0 0 8 4"><path d="M0 0 H8 L4 4 Z" fill="#5a5a5a"/></svg>
<div class="a" style="left:1260px;top:47px;width:17px;height:17px;background:#f3f5f8;border:1px solid #b6b6b6"></div>
<svg class="a" style="left:1264px;top:54px" width="8" height="4" viewBox="0 0 8 4"><path d="M0 0 H8 L4 4 Z" fill="#5a5a5a"/></svg>
<div class="a" style="left:956px;top:166px;width:323px;height:20px;border:2px solid #107c41"></div>
<div class="a" style="left:1274px;top:181px;width:7px;height:7px;background:#107c41;border:1px solid #fff"></div>
<svg class="a" style="left:676px;top:516px" width="205" height="50" viewBox="0 0 205 50"><g opacity="0.09"><g fill="none" stroke="#000" stroke-width="6.5" stroke-linecap="round" stroke-linejoin="round"><path d="M9 24 Q5 40 22 40 H132 V12"/><path d="M40 25 V40 M56 25 V40 M90 25 V40"/><path d="M132 40 H178 Q196 40 194 28 Q190 18 172 22 Q156 26 152 40"/></g><g fill="#000"><path d="M24 10 L29 15 L24 20 L19 15 Z"/><path d="M37 10 L42 15 L37 20 L32 15 Z"/><path d="M180 9 L185 14 L180 19 L175 14 Z"/></g></g></svg>
</div>
<div class="a" style="left:1577px;top:219px;width:17px;height:582px;border-radius:8px;background:#3d3d3d"></div>
<svg class="a" style="left:1581px;top:224px" width="10" height="7" viewBox="0 0 10 7"><path d="M0 7 L5 0 L10 7 Z" fill="#c8c8c8"/></svg>
<div class="a" style="left:1581px;top:236px;width:10px;height:359px;border-radius:5px;background:#c8c8c8"></div>
<svg class="a" style="left:1581px;top:789px" width="10" height="7" viewBox="0 0 10 7"><path d="M0 0 L5 7 L10 0 Z" fill="#c8c8c8"/></svg>
<div class="a" style="left:0px;top:798px;width:1595px;height:16px;background:#4f4b4c"></div>
<div class="a" style="left:112px;top:798px;width:52px;height:16px;background:#fff"></div>
<div class="a" style="left:104px;top:798px;width:8px;height:8px;background:#fff"></div><div class="a" style="left:96px;top:798px;width:16px;height:16px;background:#4f4b4c;border-top-right-radius:8px"></div>
<div class="a" style="left:164px;top:798px;width:8px;height:8px;background:#fff"></div><div class="a" style="left:164px;top:798px;width:16px;height:16px;background:#4f4b4c;border-top-left-radius:8px"></div>
<svg class="a" style="left:25px;top:806px" width="40" height="8" viewBox="0 0 40 8"><path d="M7 1 L3 6 M33 1 L37 6" stroke="#9a9697" stroke-width="1"/></svg>
<div class="t" style="left:120.70px;top:802.00px;font-size:12.11px;line-height:20px;color:#262626;font-family:'Liberation Sans',sans-serif;font-weight:bold">Feuil1</div>
<div class="t" style="left:182.00px;top:803.00px;font-size:13.22px;line-height:20px;color:#e0e0e0;font-family:'Liberation Sans',sans-serif">Feuil4</div>
<div class="t" style="left:245.50px;top:803.00px;font-size:13.22px;line-height:20px;color:#e0e0e0;font-family:'Liberation Sans',sans-serif">Feuil3</div>
<div class="t" style="left:308.00px;top:803.00px;font-size:13.22px;line-height:20px;color:#e0e0e0;font-family:'Liberation Sans',sans-serif">Feuil2</div>
<div class="t" style="left:371.30px;top:803.00px;font-size:13.22px;line-height:20px;color:#e0e0e0;font-family:'Liberation Sans',sans-serif">Feuil5</div>
<div class="t" style="left:434.50px;top:803.00px;font-size:13.22px;line-height:20px;color:#e0e0e0;font-family:'Liberation Sans',sans-serif">Feuil6</div>
<div class="a" style="left:168px;top:806px;width:1px;height:8px;background:#8a8687"></div>
<div class="a" style="left:231px;top:806px;width:1px;height:8px;background:#8a8687"></div>
<div class="a" style="left:294px;top:806px;width:1px;height:8px;background:#8a8687"></div>
<div class="a" style="left:357px;top:806px;width:1px;height:8px;background:#8a8687"></div>
<div class="a" style="left:420px;top:806px;width:1px;height:8px;background:#8a8687"></div>
<div class="a" style="left:483px;top:806px;width:1px;height:8px;background:#8a8687"></div>
<div class="a" style="left:526px;top:809px;width:11px;height:1px;background:#e0e0e0"></div>
<div class="a" style="left:531px;top:804px;width:1px;height:10px;background:#e0e0e0"></div>
<div class="a" style="left:958px;top:809px;width:2px;height:2px;background:#ddd"></div>
<div class="a" style="left:975px;top:805px;width:602px;height:16px;border-radius:7px;background:#3d3d3d"></div>
<div class="a" style="left:991px;top:809px;width:526px;height:12px;border-radius:5px;background:#c8c8c8"></div>
<svg class="a" style="left:980px;top:809px" width="7" height="10" viewBox="0 0 7 10"><path d="M7 0 L0 5 L7 10 Z" fill="#c8c8c8"/></svg>
<svg class="a" style="left:1565px;top:809px" width="7" height="10" viewBox="0 0 7 10"><path d="M0 0 L7 5 L0 10 Z" fill="#c8c8c8"/></svg>
</body></html>
